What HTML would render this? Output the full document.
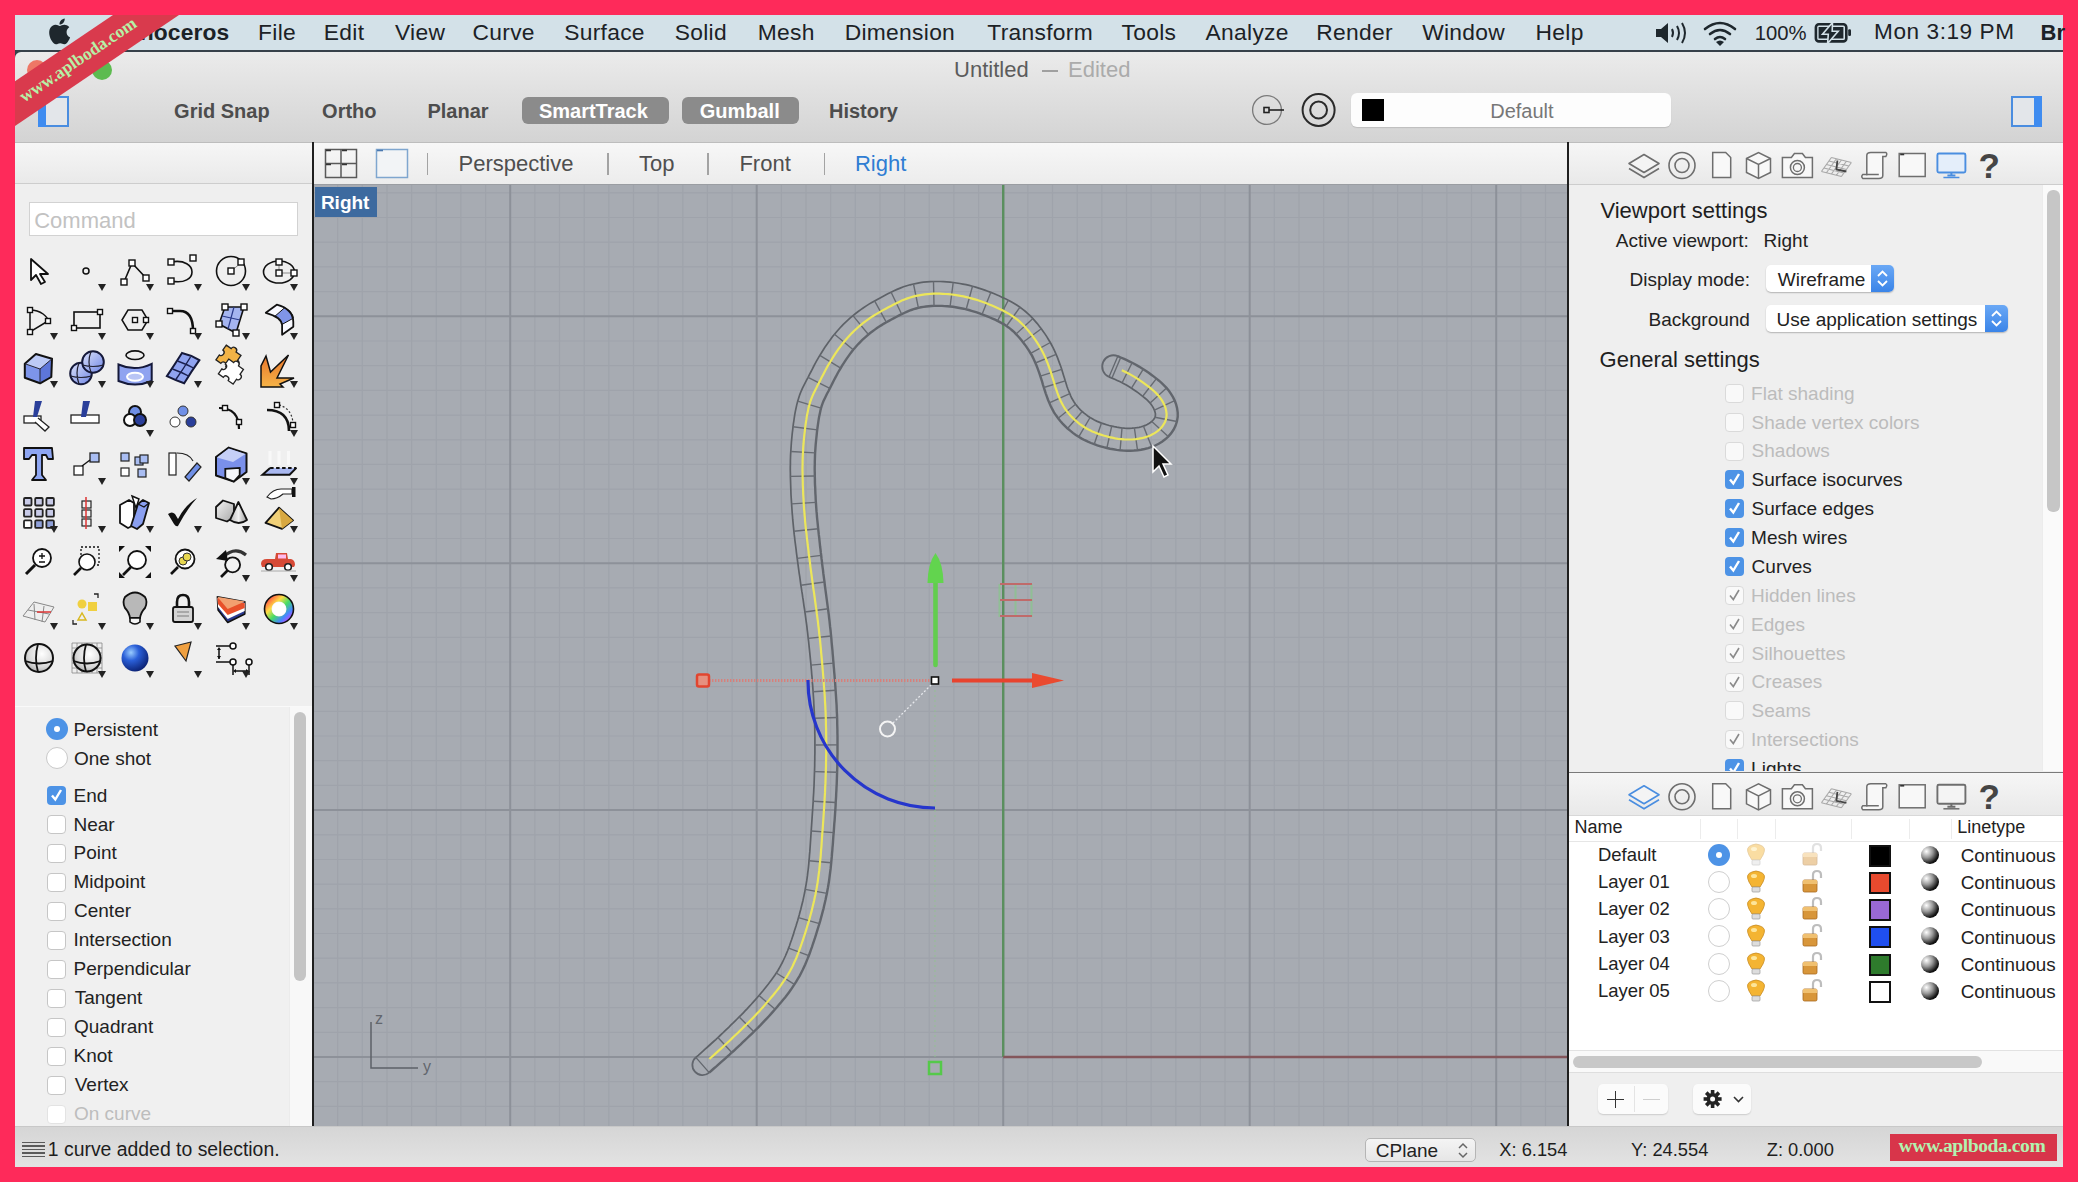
<!DOCTYPE html>
<html><head><meta charset="utf-8">
<style>
*{margin:0;padding:0;box-sizing:border-box}
html,body{width:2078px;height:1182px;overflow:hidden}
body{background:#fe2a5a;font-family:"Liberation Sans",sans-serif;position:relative;color:#222}
.a{position:absolute}
.t{position:absolute;white-space:nowrap;line-height:1}
svg{overflow:visible}
</style></head><body>
<div class="a" style="left:15px;top:15px;width:2048px;height:36px;background:#d3e1e8;"></div>
<div class="a" style="left:15px;top:50px;width:2048px;height:2px;background:#37414a;"></div>
<svg class="a" style="left:47px;top:18px" width="24" height="27" viewBox="0 0 24 27">
<path fill="#1e272d" d="M19.6 14.3c0-3.3 2.7-4.9 2.8-5-1.5-2.2-3.9-2.5-4.7-2.6-2-.2-3.9 1.2-4.9 1.2-1 0-2.6-1.2-4.2-1.1-2.2 0-4.2 1.3-5.3 3.2-2.3 3.9-.6 9.8 1.6 13 1.1 1.6 2.4 3.3 4.1 3.3 1.6-.1 2.3-1.1 4.2-1.1 2 0 2.5 1.1 4.2 1 1.8 0 2.9-1.6 3.9-3.2 1.2-1.800 1.700-3.500 1.800-3.600-.1 0-3.500-1.300-3.500-5.100zM16.400 4.700c.9-1.100 1.500-2.600 1.300-4.100-1.300.1-2.900.9-3.800 2-.8.900-1.600 2.500-1.400 3.900 1.500.1 3-.7 3.900-1.800z"/></svg>
<div class="t" style="left:102.8px;top:21.3px;font-size:22.8px;color:#1c2226;font-weight:bold;letter-spacing:0.1px;">Rhinoceros</div>
<div class="t" style="left:258.1px;top:21.3px;font-size:22.8px;color:#1c2226;letter-spacing:0.3px;">File</div>
<div class="t" style="left:323.8px;top:21.3px;font-size:22.8px;color:#1c2226;letter-spacing:0.3px;">Edit</div>
<div class="t" style="left:395.0px;top:21.3px;font-size:22.8px;color:#1c2226;letter-spacing:0.3px;">View</div>
<div class="t" style="left:472.5px;top:21.3px;font-size:22.8px;color:#1c2226;letter-spacing:0.3px;">Curve</div>
<div class="t" style="left:564.2px;top:21.3px;font-size:22.8px;color:#1c2226;letter-spacing:0.3px;">Surface</div>
<div class="t" style="left:674.7px;top:21.3px;font-size:22.8px;color:#1c2226;letter-spacing:0.3px;">Solid</div>
<div class="t" style="left:757.7px;top:21.3px;font-size:22.8px;color:#1c2226;letter-spacing:0.3px;">Mesh</div>
<div class="t" style="left:844.7px;top:21.3px;font-size:22.8px;color:#1c2226;letter-spacing:0.3px;">Dimension</div>
<div class="t" style="left:987.3px;top:21.3px;font-size:22.8px;color:#1c2226;letter-spacing:0.3px;">Transform</div>
<div class="t" style="left:1121.5px;top:21.3px;font-size:22.8px;color:#1c2226;letter-spacing:0.3px;">Tools</div>
<div class="t" style="left:1205.6px;top:21.3px;font-size:22.8px;color:#1c2226;letter-spacing:0.3px;">Analyze</div>
<div class="t" style="left:1316.3px;top:21.3px;font-size:22.8px;color:#1c2226;letter-spacing:0.3px;">Render</div>
<div class="t" style="left:1422.2px;top:21.3px;font-size:22.8px;color:#1c2226;letter-spacing:0.3px;">Window</div>
<div class="t" style="left:1535.6px;top:21.3px;font-size:22.8px;color:#1c2226;letter-spacing:0.3px;">Help</div>
<svg class="a" style="left:1655px;top:20px" width="36" height="26" viewBox="0 0 36 26">
<path fill="#1e272d" d="M1 9h5l7-6v20l-7-6H1z"/>
<path fill="none" stroke="#1e272d" stroke-width="2" d="M17 9q2 4 0 8M22 6q4 7 0 14M27 3q6 10 0 20"/></svg>
<svg class="a" style="left:1702px;top:19px" width="36" height="28" viewBox="0 0 36 28">
<g fill="none" stroke="#1e272d" stroke-width="2.6" stroke-linecap="round">
<path d="M3 10q15-12 30 0"/><path d="M8 15q10-8 20 0"/><path d="M13 20q5-4 10 0"/></g>
<path fill="#1e272d" d="M14 23l4 4 4-4q-4-3-8 0z"/></svg>
<div class="t" style="left:1754.7px;top:23.3px;font-size:20.3px;color:#1c2226;">100%</div>
<svg class="a" style="left:1813px;top:19px" width="40" height="26" viewBox="0 0 40 26">
<rect x="2.9" y="5.2" width="30.4" height="17.2" rx="3" fill="none" stroke="#1e272d" stroke-width="2.6"/>
<rect x="5.6" y="8" width="24.8" height="11.5" fill="#1e272d"/>
<rect x="35.2" y="10.2" width="2.8" height="6.8" rx="1.2" fill="#1e272d"/>
<path d="M19.5 3.5L9.5 15.2H15.3L14.6 24.5L25.2 12.2H19.2Z" fill="#1e272d" stroke="#d3e1e8" stroke-width="1.6" stroke-linejoin="miter"/></svg>
<div class="t" style="left:1874.1px;top:21.4px;font-size:22.6px;color:#1c2226;letter-spacing:0.55px;">Mon 3:19 PM</div>
<div class="t" style="left:2040.5px;top:21.9px;font-size:22px;color:#1c2226;font-weight:bold;">Br</div>
<div class="a" style="left:15px;top:52px;width:8px;height:8px;background:#37414a;"></div>
<div class="a" style="left:15px;top:52px;width:2048px;height:91px;background:linear-gradient(#ebebeb,#d3d3d3);border-top-left-radius:6px"></div>
<div class="a" style="left:15px;top:142px;width:2048px;height:1px;background:#bdbdbd;"></div>
<div class="a" style="left:27px;top:60px;width:20px;height:20px;border-radius:50%;background:#ee7766"></div>
<div class="a" style="left:59px;top:60px;width:20px;height:20px;border-radius:50%;background:#f5bd4f"></div>
<div class="a" style="left:92px;top:60px;width:20px;height:20px;border-radius:50%;background:#5dbb50"></div>
<div class="t" style="left:954.1px;top:58.8px;font-size:22px;color:#5c5c5c;">Untitled</div>
<div class="a" style="left:1042px;top:70px;width:16px;height:2px;background:#a0a0a0;"></div>
<div class="t" style="left:1068.0px;top:58.8px;font-size:22px;color:#ababab;">Edited</div>
<div class="a" style="left:38px;top:96px;width:31px;height:31px;border:2px solid #4a8de0;background:#e3e6ea"></div>
<div class="a" style="left:38px;top:96px;width:8px;height:31px;background:#3f8cf0;"></div>
<div class="t" style="left:174.1px;top:100.6px;font-size:20px;color:#4d4d4d;font-weight:bold;">Grid Snap</div>
<div class="t" style="left:322.1px;top:100.6px;font-size:20px;color:#4d4d4d;font-weight:bold;">Ortho</div>
<div class="t" style="left:427.4px;top:100.6px;font-size:20px;color:#4d4d4d;font-weight:bold;">Planar</div>
<div class="a" style="left:522px;top:97px;width:147px;height:27px;border-radius:6px;background:#8b8b8b"></div>
<div class="a" style="left:682px;top:97px;width:117px;height:27px;border-radius:6px;background:#8b8b8b"></div>
<div class="t" style="left:538.9px;top:100.8px;font-size:20px;color:#ffffff;font-weight:bold;">SmartTrack</div>
<div class="t" style="left:699.7px;top:100.8px;font-size:20px;color:#ffffff;font-weight:bold;">Gumball</div>
<div class="t" style="left:829.0px;top:100.8px;font-size:20px;color:#4d4d4d;font-weight:bold;">History</div>
<svg class="a" style="left:1250px;top:92px" width="40" height="36" viewBox="0 0 40 36">
<circle cx="17" cy="18" r="14.4" fill="none" stroke="#7a7a7a" stroke-width="1.3"/>
<rect x="14" y="15.5" width="5" height="5" fill="none" stroke="#222" stroke-width="1.6"/>
<path d="M19 18h15" stroke="#222" stroke-width="1.6"/></svg>
<svg class="a" style="left:1300px;top:92px" width="38" height="36" viewBox="0 0 38 36">
<circle cx="18.6" cy="18" r="16" fill="none" stroke="#2a2a2a" stroke-width="2"/>
<circle cx="18.6" cy="18" r="8.4" fill="none" stroke="#2a2a2a" stroke-width="2"/></svg>
<div class="a" style="left:1351px;top:93px;width:320px;height:34px;border-radius:6px;background:#fdfdfd;box-shadow:0 1px 1px rgba(0,0,0,.12)"></div>
<div class="a" style="left:1362px;top:99px;width:22px;height:22px;background:#000;"></div>
<div class="t" style="left:1490.2px;top:101.1px;font-size:20px;color:#777777;">Default</div>
<div class="a" style="left:2011px;top:96px;width:31px;height:31px;border:2px solid #4a8de0;background:#e3e6ea"></div>
<div class="a" style="left:2034px;top:96px;width:8px;height:31px;background:#3f8cf0;"></div>
<div class="a" style="left:15px;top:143px;width:297px;height:983px;background:#efefef;"></div>
<div class="a" style="left:15px;top:143px;width:297px;height:41px;background:linear-gradient(#f6f6f6,#e9e9e9);"></div>
<div class="a" style="left:15px;top:183px;width:297px;height:1px;background:#cdcdcd;"></div>
<div class="a" style="left:29px;top:202px;width:269px;height:34px;background:#fff;border:1px solid #d2d2d2"></div>
<div class="t" style="left:34.2px;top:210.0px;font-size:22px;color:#c2c2c2;">Command</div>
<svg class="a" style="left:15px;top:240px" width="297" height="450" viewBox="15 240 297 450">
<defs><linearGradient id="rainbow" x1="0" y1="0" x2="1" y2="1"><stop offset="0" stop-color="#f44"/><stop offset=".3" stop-color="#fd4"/><stop offset=".55" stop-color="#4d6"/><stop offset=".8" stop-color="#48f"/><stop offset="1" stop-color="#c4f"/></linearGradient><linearGradient id="bsp2" x1="0" y1="0" x2="1" y2="1"><stop offset="0" stop-color="#dde3fb"/><stop offset="1" stop-color="#6f86e6"/></linearGradient><linearGradient id="gcube" x1="0" y1="0" x2="1" y2="1"><stop offset="0" stop-color="#f4f4f4"/><stop offset="1" stop-color="#a8a8a8"/></linearGradient><linearGradient id="gcone" x1="0" y1="0" x2="1" y2="0"><stop offset="0" stop-color="#b8b8b8"/><stop offset=".5" stop-color="#f0f0f0"/><stop offset="1" stop-color="#9a9a9a"/></linearGradient><linearGradient id="expl" x1="0" y1="0" x2="0" y2="1"><stop offset="0" stop-color="#e8742a"/><stop offset="1" stop-color="#f6b448"/></linearGradient><radialGradient id="gsph" cx=".6" cy=".35" r=".8"><stop offset="0" stop-color="#fff"/><stop offset=".6" stop-color="#d8d8d8"/><stop offset="1" stop-color="#999"/></radialGradient><radialGradient id="bsph" cx=".35" cy=".3" r=".75"><stop offset="0" stop-color="#9cf"/><stop offset=".4" stop-color="#2a5fd8"/><stop offset="1" stop-color="#0a1f70"/></radialGradient></defs>
<path d="M31 259V280L36 275L41 284L45 282L40 274L48 274Z" fill="#fff" stroke="#111" stroke-width="1.8" stroke-linejoin="round"/>
<circle cx="86" cy="271" r="3" fill="none" stroke="#111" stroke-width="1.5"/><path d="M98 284H106L102 291Z" fill="#222"/>
<path d="M124 282L132 263L146 278" fill="none" stroke="#111" stroke-width="1.6"/><rect x="121.0" y="279.0" width="6" height="6" fill="#fff" stroke="#111" stroke-width="1.4"/><rect x="129.0" y="260.0" width="6" height="6" fill="#fff" stroke="#111" stroke-width="1.4"/><rect x="143.0" y="275.0" width="6" height="6" fill="#fff" stroke="#111" stroke-width="1.4"/><path d="M146 284H154L150 291Z" fill="#222"/>
<path d="M171 262C199 257 199 287 171 281" fill="none" stroke="#111" stroke-width="1.6"/><rect x="168.0" y="259.0" width="6" height="6" fill="#fff" stroke="#111" stroke-width="1.4"/><rect x="190.0" y="255.0" width="6" height="6" fill="#fff" stroke="#111" stroke-width="1.4"/><rect x="168.0" y="278.0" width="6" height="6" fill="#fff" stroke="#111" stroke-width="1.4"/><path d="M194 284H202L198 291Z" fill="#222"/>
<circle cx="231" cy="271" r="14.5" fill="none" stroke="#111" stroke-width="1.6"/><path d="M231 271L241 263" stroke="#888"/><rect x="228.0" y="268.0" width="6" height="6" fill="#fff" stroke="#111" stroke-width="1.4"/><rect x="238.0" y="259.0" width="6" height="6" fill="#fff" stroke="#111" stroke-width="1.4"/><path d="M242 284H250L246 291Z" fill="#222"/>
<ellipse cx="279" cy="272" rx="15.5" ry="11" fill="none" stroke="#111" stroke-width="1.6"/><path d="M279 273H293M279 262V273" stroke="#888"/><rect x="276.0" y="259.0" width="6" height="6" fill="#fff" stroke="#111" stroke-width="1.4"/><rect x="276.0" y="270.0" width="6" height="6" fill="#fff" stroke="#111" stroke-width="1.4"/><rect x="291.0" y="270.0" width="6" height="6" fill="#fff" stroke="#111" stroke-width="1.4"/><path d="M290 284H298L294 291Z" fill="#222"/>
<path d="M30 310C41 310 48 317 48 321L30 332Z" fill="none" stroke="#111" stroke-width="1.5"/><rect x="27.5" y="307.5" width="5" height="5" fill="#fff" stroke="#111" stroke-width="1.4"/><rect x="45.5" y="318.5" width="5" height="5" fill="#fff" stroke="#111" stroke-width="1.4"/><rect x="27.5" y="329.5" width="5" height="5" fill="#fff" stroke="#111" stroke-width="1.4"/><path d="M50 333H58L54 340Z" fill="#222"/>
<rect x="74" y="312" width="26" height="16" fill="none" stroke="#111" stroke-width="1.6"/><rect x="71.5" y="325.5" width="5" height="5" fill="#fff" stroke="#111" stroke-width="1.4"/><rect x="97.5" y="309.5" width="5" height="5" fill="#fff" stroke="#111" stroke-width="1.4"/><path d="M98 333H106L102 340Z" fill="#222"/>
<path d="M122 320L128 310H142L148 320L142 330H128Z" fill="none" stroke="#111" stroke-width="1.5"/><rect x="132.5" y="317.5" width="5" height="5" fill="#fff" stroke="#111" stroke-width="1.4"/><rect x="143.5" y="317.5" width="5" height="5" fill="#fff" stroke="#111" stroke-width="1.4"/><path d="M146 333H154L150 340Z" fill="#222"/>
<path d="M170 311H180Q193 311 193 331" fill="none" stroke="#111" stroke-width="2.6"/><rect x="167.5" y="308.5" width="5" height="5" fill="#fff" stroke="#111" stroke-width="1.4"/><rect x="190.5" y="328.5" width="5" height="5" fill="#fff" stroke="#111" stroke-width="1.4"/><path d="M194 333H202L198 340Z" fill="#222"/>
<path d="M225 307L244 307L236 333L219 324Z" fill="#a5b5f0" stroke="#111" stroke-width="1.6"/><path d="M234 307L228 329M222 316L240 320" stroke="#2a3a8a" stroke-width="1.2"/><rect x="222.0" y="304.0" width="6" height="6" fill="#fff" stroke="#111" stroke-width="1.4"/><rect x="241.0" y="304.0" width="6" height="6" fill="#fff" stroke="#111" stroke-width="1.4"/><rect x="233.0" y="330.0" width="6" height="6" fill="#fff" stroke="#111" stroke-width="1.4"/><rect x="216.0" y="321.0" width="6" height="6" fill="#fff" stroke="#111" stroke-width="1.4"/><path d="M242 333H250L246 340Z" fill="#222"/>
<path d="M265.8 312.8L276.8 304.7Q293 309 293.3 322V326.8L282.1 334.7V324.9Q281 317 265.8 312.8Z" fill="#f8f9ff"/><path d="M275.1 316.1L284.7 307.7Q293 312 293.3 318.2L282.1 324.4Q281 318 275.1 316.1Z" fill="#8095e8" stroke="#111" stroke-width="1"/><path d="M265.8 312.8L276.8 304.7Q293 309 293.3 322V326.8L282.1 334.7V324.9Q281 317 265.8 312.8Z" fill="none" stroke="#111" stroke-width="1.8" stroke-linejoin="round"/><path d="M290 333H298L294 340Z" fill="#222"/>
<path d="M24.8 363.7L40 369V383.3L24.8 377.7Z" fill="#7d95ea"/><path d="M40 369L52 358.8L51.3 377L40.1 383.3Z" fill="#5d76da"/><path d="M24.8 363.7L35.9 354L52 358.8L40 369Z" fill="#bccaf6"/><path d="M24.8 363.7L35.9 354L52 358.8L51.3 377L40.1 383.3L24.8 377.7Z" fill="none" stroke="#111" stroke-width="2" stroke-linejoin="round"/><path d="M24.8 363.7L40 369L52 358.8M40 369V383.3" fill="none" stroke="#223" stroke-width="1"/><path d="M50 381H58L54 388Z" fill="#222"/>
<circle cx="81" cy="373.5" r="10.8" fill="url(#bsp2)" stroke="#15193a" stroke-width="2"/><path d="M70.5 376Q81 379 91.5 376M79 363Q75 373 79 384" fill="none" stroke="#223" stroke-width="1.2"/><circle cx="93" cy="362" r="10.8" fill="url(#bsp2)" stroke="#15193a" stroke-width="2"/><path d="M82.5 365Q93 368 103.5 365M91 351.5Q87 362 91 372.5" fill="none" stroke="#223" stroke-width="1.2"/><path d="M98 381H106L102 388Z" fill="#222"/>
<ellipse cx="135" cy="355.2" rx="9" ry="4.3" fill="none" stroke="#111" stroke-width="1.6"/><path d="M118.5 364.5Q135 372 151.7 363.8V381Q135 388 118.5 381Z" fill="#8fa3f0" stroke="#15193a" stroke-width="2"/><ellipse cx="135" cy="376.8" rx="8" ry="4" fill="#b9c5f5" stroke="#fff" stroke-width="2"/><path d="M146 381H154L150 388Z" fill="#222"/>
<path d="M182 353Q191 355 199.4 360.2Q191 372 184.2 383.3Q175 380 166.9 376.1Q175 364 182 353Z" fill="#8fa3f0" stroke="#15193a" stroke-width="2"/><path d="M190.5 357Q184 368 175.5 380M177.5 361Q186 364 193.5 368M172.5 369Q181 372 188.5 376" fill="none" stroke="#1a2050" stroke-width="1.4"/><path d="M194 381H202L198 388Z" fill="#222"/>
<g transform="rotate(35 231 368)"><path d="M216 356h6a3 3 0 0 1 6 0h6v6a3 3 0 0 1 0 6v6h-6a3 3 0 0 0-6 0h-6v-6a3 3 0 0 0 0-6z" fill="#f2b346" stroke="#222" stroke-width="1.3" transform="translate(-2 -4)"/><path d="M230 368h6a3 3 0 0 1 6 0h6v6a3 3 0 0 1 0 6v6h-6a3 3 0 0 0-6 0h-6v-6a3 3 0 0 0 0-6z" fill="#fff" stroke="#222" stroke-width="1.3" transform="translate(-6 -6)"/></g>
<path d="M261 387V366L266 356L270.5 372L288.5 355L277 378L294 378L280 384L283 387Z" fill="url(#expl)" stroke="#111" stroke-width="1.5" stroke-linejoin="miter"/><path d="M290 381H298L294 388Z" fill="#222"/>
<rect x="24" y="416" width="17" height="7" fill="#fff" stroke="#222" stroke-width="1.3"/><path d="M38 418L49 427L45 431L35 422" fill="#fff" stroke="#222" stroke-width="1.3"/><path d="M35 401H42L37 417H33Z" fill="#2a3f9a"/>
<rect x="71" y="415" width="28" height="8" fill="#fff" stroke="#222" stroke-width="1.3"/><path d="M83 401H90L86 417H81Z" fill="#2a3f9a"/>
<circle cx="135" cy="412" r="6" fill="#6f8fe6" stroke="#111" stroke-width="2"/><circle cx="130" cy="420" r="6" fill="#fff" stroke="#111" stroke-width="2"/><circle cx="140" cy="420" r="6" fill="#2a3f9a" stroke="#111" stroke-width="2"/><path d="M146 430H154L150 437Z" fill="#222"/>
<circle cx="183" cy="411" r="5" fill="#6f8fe6" stroke="#333" stroke-width="1"/><circle cx="175" cy="422" r="5" fill="#fff" stroke="#333" stroke-width="1"/><circle cx="191" cy="422" r="5" fill="#2a3f9a" stroke="#333" stroke-width="1"/>
<path d="M219 408Q239 408 239 429" fill="none" stroke="#111" stroke-width="2.2"/><rect x="222.5" y="405.5" width="5" height="5" fill="#fff" stroke="#111" stroke-width="1.4"/><rect x="236.5" y="419.5" width="5" height="5" fill="#fff" stroke="#111" stroke-width="1.4"/>
<path d="M267 410Q289 410 289 431" fill="none" stroke="#111" stroke-width="2.6"/><path d="M275 404Q293 407 293 425" fill="none" stroke="#333" stroke-width="1.2" stroke-dasharray="2 2"/><rect x="274.5" y="402.5" width="5" height="5" fill="#fff" stroke="#111" stroke-width="1.4"/><rect x="290.5" y="422.5" width="5" height="5" fill="#fff" stroke="#111" stroke-width="1.4"/><path d="M290 430H298L294 437Z" fill="#222"/>
<path d="M24 448H52L53 459H48L46 455H42V475L46 480H32L36 475V455H32L29 459H24Z" fill="#8ea6f2" stroke="#111" stroke-width="1.8" stroke-linejoin="round"/>
<rect x="74" y="466" width="9" height="9" fill="#fff" stroke="#222" stroke-width="1.3"/><rect x="90" y="453" width="9" height="9" fill="#a9bdf2" stroke="#222" stroke-width="1.3"/><path d="M82 466L90 460" stroke="#111" stroke-width="1.4"/><path d="M98 478H106L102 485Z" fill="#222"/>
<rect x="121" y="453" width="8" height="8" fill="#a9bdf2" stroke="#222" stroke-width="1.2"/><rect x="121" y="468" width="8" height="8" fill="#fff" stroke="#222" stroke-width="1.2"/><rect x="135" y="457" width="8" height="8" fill="#a9bdf2" stroke="#222" stroke-width="1.2"/><rect x="140" y="455" width="8" height="8" fill="#a9bdf2" stroke="#222" stroke-width="1.2"/><rect x="138" y="469" width="8" height="8" fill="#a9bdf2" stroke="#222" stroke-width="1.2"/>
<rect x="169" y="453" width="7" height="22" fill="#fff" stroke="#222" stroke-width="1.2"/><path d="M185 477L197 463L201 467L189 481Z" fill="#6f8fe6" stroke="#222" stroke-width="1.2"/><path d="M177 453Q189 453 193 461" fill="none" stroke="#222" stroke-width="1.2"/>
<path d="M216 457L228.7 447.6L246.5 453.5V472L233.8 481.5L216 475.5Z" fill="#7a90ea" stroke="#111" stroke-width="2" stroke-linejoin="round"/><path d="M217 457.5L228.7 448.6L245.5 454L233 462Z" fill="#c5cff7"/><path d="M225.3 468.8L239.7 467.9V475L233.8 481.5L225.3 478Z" fill="#f4f6fa" stroke="#111" stroke-width="1.8"/><path d="M242 478H250L246 485Z" fill="#222"/>
<path d="M270 451V465M279 451V465M288.5 451V465" stroke="#fafafa" stroke-width="3.2" opacity=".85"/><path d="M262.5 474.7L270.1 467.9H296.4L289.6 474.7Z" fill="#a9b8f0"/><path d="M270.1 467.9H296.4" stroke="#111" stroke-width="2" stroke-dasharray="3.5 2.5"/><path d="M270.1 467.9L262.5 474.7H289.6L296.4 467.9" fill="none" stroke="#111" stroke-width="2"/><path d="M290 478H298L294 485Z" fill="#222"/>
<rect x="24.0" y="498.0" width="7.5" height="7.5" rx="1" fill="#c8cbe8" stroke="#222" stroke-width="1.8"/><rect x="24.0" y="509.2" width="7.5" height="7.5" rx="1" fill="#c8cbe8" stroke="#222" stroke-width="1.8"/><rect x="24.0" y="520.4" width="7.5" height="7.5" rx="1" fill="#fff" stroke="#222" stroke-width="1.8"/><rect x="35.2" y="498.0" width="7.5" height="7.5" rx="1" fill="#c8cbe8" stroke="#222" stroke-width="1.8"/><rect x="35.2" y="509.2" width="7.5" height="7.5" rx="1" fill="#c8cbe8" stroke="#222" stroke-width="1.8"/><rect x="35.2" y="520.4" width="7.5" height="7.5" rx="1" fill="#8fa0d8" stroke="#222" stroke-width="1.8"/><rect x="46.4" y="498.0" width="7.5" height="7.5" rx="1" fill="#c8cbe8" stroke="#222" stroke-width="1.8"/><rect x="46.4" y="509.2" width="7.5" height="7.5" rx="1" fill="#c8cbe8" stroke="#222" stroke-width="1.8"/><rect x="46.4" y="520.4" width="7.5" height="7.5" rx="1" fill="#8fa0d8" stroke="#222" stroke-width="1.8"/><path d="M50 526H58L54 533Z" fill="#222"/>
<rect x="82" y="501" width="9" height="7" fill="none" stroke="#222" stroke-width="1.2"/><rect x="82" y="510" width="9" height="7" fill="none" stroke="#222" stroke-width="1.2"/><rect x="82" y="519" width="9" height="7" fill="none" stroke="#222" stroke-width="1.2"/><path d="M86 497V529" stroke="#d33" stroke-width="1.5"/><path d="M98 526H106L102 533Z" fill="#222"/>
<path d="M120 505L129 500L134 503V525L128 528L120 523Z" fill="#fff" stroke="#111" stroke-width="1.8" stroke-linejoin="round"/><path d="M132 496L139 499L136 508Z" fill="#fff" stroke="#111" stroke-width="1.4"/><path d="M131 526L138 504L143 500L149 503L143 524L137 529Z" fill="#8a9ff0" stroke="#111" stroke-width="1.8" stroke-linejoin="round"/><path d="M138 504L144 507L149 503" fill="none" stroke="#111" stroke-width="1.2"/><path d="M146 526H154L150 533Z" fill="#222"/>
<path d="M168 514Q172 511 175 514L178 519Q185 505 197 498Q187 509 178 526Q176 527 174 524Z" fill="#111"/><path d="M194 526H202L198 533Z" fill="#222"/>
<path d="M216 507L223 500.5L234 504V517L227 521.5L216 518Z" fill="url(#gcube)" stroke="#111" stroke-width="1.8" stroke-linejoin="round"/><path d="M238.4 502L247 520Q239 526 230 520Z" fill="url(#gcone)" stroke="#111" stroke-width="1.8" stroke-linejoin="round"/><path d="M242 526H250L246 533Z" fill="#222"/>
<path d="M279 507.7L265.5 522.9L282 528.8L293 520.4Z" fill="#f0d078" stroke="#111" stroke-width="1.8" stroke-linejoin="round"/><path d="M279 507.7L282 528.8L293 520.4Z" fill="#d8a840"/><path d="M267 497Q273 489 281 489H292V494H283Q277 499 271 499Z" fill="#fff" stroke="#222" stroke-width="1.2"/><rect x="292" y="487" width="3.5" height="10" fill="#111"/><path d="M290 526H298L294 533Z" fill="#222"/>
<circle cx="42" cy="558" r="9" fill="#fff" stroke="#111" stroke-width="1.8"/><path d="M35 565L26 574" stroke="#111" stroke-width="3"/><path d="M39 556h6M42 553v6M39 562h6" stroke="#111" stroke-width="1.3"/>
<rect x="81" y="547" width="18" height="18" fill="none" stroke="#111" stroke-width="1.3" stroke-dasharray="2 2"/><circle cx="87" cy="562" r="8" fill="#fff" stroke="#111" stroke-width="1.6"/><path d="M81 568L74 575" stroke="#111" stroke-width="2.6"/>
<circle cx="137" cy="560" r="9" fill="#fff" stroke="#111" stroke-width="1.8"/><path d="M131 567L123 575" stroke="#111" stroke-width="2.6"/><path d="M119 546h6l-6 6zM151 546h-6l6 6zM151 578h-6l6-6zM119 578h6l-6-6z" fill="#111"/>
<circle cx="185" cy="559" r="9.5" fill="#fff" stroke="#111" stroke-width="1.8"/><circle cx="183" cy="561" r="4" fill="#e8d850" stroke="#333"/><circle cx="187" cy="557" r="4" fill="#e8d850" stroke="#333"/><path d="M178 567L171 574" stroke="#111" stroke-width="2.6"/>
<circle cx="232.6" cy="564.8" r="7.5" fill="#f2f2f2" stroke="#111" stroke-width="1.8"/><path d="M227.5 570.5L221 577" stroke="#111" stroke-width="2.6"/><path d="M223 557Q235 546 246 555" fill="none" stroke="#333" stroke-width="3.2"/><path d="M216 559L226 550L228 561Z" fill="#111"/><path d="M242 575H250L246 582Z" fill="#222"/>
<path d="M261 564Q261 559 267 559H275L276 553H287L288 559H291Q295 560 295 565L294 567H262Z" fill="#d64a36"/><rect x="278" y="554.5" width="8" height="4" fill="#fbe"/><circle cx="269" cy="567" r="3.3" fill="#fff" stroke="#222" stroke-width="1.6"/><circle cx="288" cy="567" r="3.3" fill="#fff" stroke="#222" stroke-width="1.6"/><path d="M261 571H296" stroke="#aaa" stroke-width="1"/><path d="M290 575H298L294 582Z" fill="#222"/>
<path d="M23 616L34 602L54 607L45 622Z" fill="#eee" stroke="#888" stroke-width="1"/><path d="M28 610L49 614M34 604L35 620M44 606L42 622" stroke="#888"/><path d="M37 612H51" stroke="#d33" stroke-width="1.5"/><path d="M50 623H58L54 630Z" fill="#222"/>
<circle cx="82" cy="604" r="4.5" fill="#f0d040"/><rect x="88" y="602" width="9" height="9" fill="#f0d040"/><path d="M82 613L78 620H86Z" fill="none" stroke="#d8b820" stroke-width="1.5"/><path d="M94 594h4v4M73 620v4h4" fill="none" stroke="#222" stroke-width="1.3"/><path d="M98 623H106L102 630Z" fill="#222"/>
<path d="M130 618Q129 612 125 608Q122 602 125 597Q135 588 145 597Q148 602 145 608Q141 612 140 618Z" fill="#b8b8b8" stroke="#111" stroke-width="1.8"/><path d="M130 618H140V622Q135 626 130 622Z" fill="#f4f4f4" stroke="#111" stroke-width="1.6"/><path d="M146 623H154L150 630Z" fill="#222"/>
<path d="M177 608V602Q177 595 183 595Q189 595 189 602V608" fill="none" stroke="#111" stroke-width="2.6"/><rect x="173" y="607" width="20" height="15" rx="2" fill="#d4d4d4" stroke="#111" stroke-width="1.8"/><path d="M177 612H189M177 616H189" stroke="#999" stroke-width="1.4"/><path d="M194 623H202L198 630Z" fill="#222"/>
<path d="M217.3 596.7L244.9 601.6V614L227.7 622.5L218 610Z" fill="#2a3a90" stroke="#111" stroke-width="1.4" stroke-linejoin="round"/><path d="M217.5 598L244.7 603V611L227.7 619L218 607Z" fill="#fff"/><path d="M217.5 598L244.7 603V608L227.7 615L218 604Z" fill="#e8502a"/><path d="M217.3 596.7L244.9 601.6L227.7 609Z" fill="#f2a070"/><path d="M242 623H250L246 630Z" fill="#222"/>
<circle cx="279" cy="609" r="11" fill="none" stroke="url(#rainbow)" stroke-width="7"/><circle cx="279" cy="609" r="14.5" fill="none" stroke="#111" stroke-width="1.6"/><circle cx="279" cy="609" r="7" fill="#fff"/><path d="M290 623H298L294 630Z" fill="#222"/>
<circle cx="39" cy="658" r="14" fill="url(#gsph)" stroke="#111" stroke-width="2"/><path d="M25 661Q39 666 53 661" fill="none" stroke="#111" stroke-width="1.8"/><path d="M38 644Q34 658 38 672" fill="none" stroke="#111" stroke-width="1.8"/>
<path d="M72 643V673M72 643H102" stroke="#888" stroke-width=".8"/><path d="M77 643V673M72 648H102" stroke="#888" stroke-width=".8"/><path d="M82 643V673M72 653H102" stroke="#888" stroke-width=".8"/><path d="M87 643V673M72 658H102" stroke="#888" stroke-width=".8"/><path d="M92 643V673M72 663H102" stroke="#888" stroke-width=".8"/><path d="M97 643V673M72 668H102" stroke="#888" stroke-width=".8"/><path d="M102 643V673M72 673H102" stroke="#888" stroke-width=".8"/><circle cx="87" cy="658" r="13.5" fill="url(#gsph)" stroke="#111" stroke-width="2"/><path d="M73.5 661Q87 666 100.5 661" fill="none" stroke="#111" stroke-width="1.8"/><path d="M86 644.5Q82 658 86 671.5" fill="none" stroke="#111" stroke-width="1.8"/><path d="M98 671H106L102 678Z" fill="#222"/>
<circle cx="135" cy="658" r="13.5" fill="url(#bsph)"/><path d="M146 671H154L150 678Z" fill="#222"/>
<path d="M175 646L191 642L186 661Z" fill="#f0a040" stroke="#222" stroke-width="1.2"/><path d="M194 671H202L198 678Z" fill="#222"/>
<path d="M216 646H230M216 662H230M219 649V659M233 665V675M249 665V675M236 671H246" fill="none" stroke="#111" stroke-width="1.5"/><path d="M217 650l2-3 2 3zM217 656l2 3 2-3zM236 669l-3 2 3 2zM246 669l3 2-3 2z" fill="#111"/><circle cx="233" cy="646" r="3" fill="#fff" stroke="#111" stroke-width="1.5"/><circle cx="233" cy="662" r="3" fill="#fff" stroke="#111" stroke-width="1.5"/><circle cx="249" cy="662" r="3" fill="#fff" stroke="#111" stroke-width="1.5"/><path d="M242 671H250L246 678Z" fill="#222"/>
</svg>
<div class="a" style="left:15px;top:706px;width:297px;height:1.5px;background:#f9f9f9;"></div>
<div class="a" style="left:15px;top:707px;width:275px;height:419px;background:#f0f0f0;"></div>
<div class="a" style="left:289px;top:707px;width:23px;height:419px;background:#f8f8f8;"></div>
<div class="a" style="left:289px;top:707px;width:1px;height:419px;background:#ebebeb;"></div>
<div class="a" style="left:294px;top:712px;width:12px;height:269px;border-radius:6px;background:#c4c4c4"></div>
<div class="a" style="left:45.5px;top:718px;width:22px;height:22px;border-radius:50%;background:#4d93e6"></div>
<div class="a" style="left:53.5px;top:726px;width:6px;height:6px;border-radius:50%;background:#fff"></div>
<div class="a" style="left:45.5px;top:747px;width:22px;height:22px;border-radius:50%;background:#fff;border:1px solid #c9c9c9"></div>
<div class="t" style="left:73.5px;top:720.2px;font-size:19px;color:#222;">Persistent</div>
<div class="t" style="left:74.0px;top:749.2px;font-size:19px;color:#222;">One shot</div>
<div class="a" style="left:47px;top:786.3px;width:19px;height:19px;border-radius:4px;background:#4d93e6"></div>
<svg class="a" style="left:47px;top:786.3px" width="19" height="19" viewBox="0 0 19 19"><path d="M5 9.5L8.3 13.5L14 4" fill="none" stroke="#fff" stroke-width="2.4"/></svg>
<div class="t" style="left:73.5px;top:785.5px;font-size:19px;color:#222;">End</div>
<div class="a" style="left:47px;top:815.2px;width:19px;height:19px;border-radius:4px;background:#fff;border:1px solid #c6c6c6"></div>
<div class="t" style="left:73.5px;top:814.5px;font-size:19px;color:#222;">Near</div>
<div class="a" style="left:47px;top:844.2px;width:19px;height:19px;border-radius:4px;background:#fff;border:1px solid #c6c6c6"></div>
<div class="t" style="left:73.5px;top:843.4px;font-size:19px;color:#222;">Point</div>
<div class="a" style="left:47px;top:873.1px;width:19px;height:19px;border-radius:4px;background:#fff;border:1px solid #c6c6c6"></div>
<div class="t" style="left:73.5px;top:872.3px;font-size:19px;color:#222;">Midpoint</div>
<div class="a" style="left:47px;top:902.0px;width:19px;height:19px;border-radius:4px;background:#fff;border:1px solid #c6c6c6"></div>
<div class="t" style="left:74.0px;top:901.2px;font-size:19px;color:#222;">Center</div>
<div class="a" style="left:47px;top:930.9px;width:19px;height:19px;border-radius:4px;background:#fff;border:1px solid #c6c6c6"></div>
<div class="t" style="left:73.5px;top:930.2px;font-size:19px;color:#222;">Intersection</div>
<div class="a" style="left:47px;top:959.9px;width:19px;height:19px;border-radius:4px;background:#fff;border:1px solid #c6c6c6"></div>
<div class="t" style="left:73.5px;top:959.1px;font-size:19px;color:#222;">Perpendicular</div>
<div class="a" style="left:47px;top:988.8px;width:19px;height:19px;border-radius:4px;background:#fff;border:1px solid #c6c6c6"></div>
<div class="t" style="left:74.7px;top:988.0px;font-size:19px;color:#222;">Tangent</div>
<div class="a" style="left:47px;top:1017.7px;width:19px;height:19px;border-radius:4px;background:#fff;border:1px solid #c6c6c6"></div>
<div class="t" style="left:74.0px;top:1017.0px;font-size:19px;color:#222;">Quadrant</div>
<div class="a" style="left:47px;top:1046.7px;width:19px;height:19px;border-radius:4px;background:#fff;border:1px solid #c6c6c6"></div>
<div class="t" style="left:73.5px;top:1045.9px;font-size:19px;color:#222;">Knot</div>
<div class="a" style="left:47px;top:1075.6px;width:19px;height:19px;border-radius:4px;background:#fff;border:1px solid #c6c6c6"></div>
<div class="t" style="left:74.7px;top:1074.8px;font-size:19px;color:#222;">Vertex</div>
<div class="a" style="left:47px;top:1104.5px;width:19px;height:19px;border-radius:4px;background:#fff;border:1px solid #e3e3e3"></div>
<div class="t" style="left:74.0px;top:1103.8px;font-size:19px;color:#bdbdbd;">On curve</div>
<div class="a" style="left:312px;top:143px;width:1256px;height:41px;background:linear-gradient(#f7f7f7,#ececec);"></div>
<div class="a" style="left:312px;top:184px;width:1256px;height:1.5px;background:#9a9da2;"></div>
<svg class="a" style="left:324px;top:148px" width="36" height="32" viewBox="0 0 36 32">
<g fill="none" stroke="#595959" stroke-width="1.5"><rect x="1.5" y="1.5" width="31" height="28"/><path d="M17 1.5v28M1.5 15.5h31"/></g>
<g stroke="#333" stroke-width="1.6"><path d="M2 2.5h5M18 2.5h5M2 16.5h5M18 16.5h5"/></g></svg>
<svg class="a" style="left:375px;top:148px" width="36" height="32" viewBox="0 0 36 32">
<rect x="1.5" y="1.5" width="31" height="28" fill="#f2f4f6" stroke="#7fa6cf" stroke-width="1.5"/>
<path d="M2 2.5h6" stroke="#4a78b0" stroke-width="1.6"/></svg>
<div class="a" style="left:426.75px;top:153px;width:1.5px;height:22px;background:#a3a3a3;"></div>
<div class="a" style="left:607.25px;top:153px;width:1.5px;height:22px;background:#a3a3a3;"></div>
<div class="a" style="left:707.25px;top:153px;width:1.5px;height:22px;background:#a3a3a3;"></div>
<div class="a" style="left:823.75px;top:153px;width:1.5px;height:22px;background:#a3a3a3;"></div>
<div class="t" style="left:458.5px;top:152.7px;font-size:22px;color:#4f4f4f;">Perspective</div>
<div class="t" style="left:639.1px;top:152.7px;font-size:22px;color:#4f4f4f;">Top</div>
<div class="t" style="left:739.4px;top:152.7px;font-size:22px;color:#4f4f4f;">Front</div>
<div class="t" style="left:854.9px;top:152.7px;font-size:22px;color:#2f7dd3;">Right</div>
<svg class="a" style="left:313px;top:185px" width="1255" height="941" viewBox="313 185 1255 941">
<rect x="313" y="185" width="1255" height="941" fill="#a7abb2"/>
<path d="M313.0 185V1126M337.7 185V1126M362.3 185V1126M387.0 185V1126M411.6 185V1126M436.3 185V1126M460.9 185V1126M485.6 185V1126M534.9 185V1126M559.5 185V1126M584.2 185V1126M608.8 185V1126M633.5 185V1126M658.1 185V1126M682.8 185V1126M707.4 185V1126M732.1 185V1126M781.4 185V1126M806.0 185V1126M830.7 185V1126M855.3 185V1126M880.0 185V1126M904.6 185V1126M929.2 185V1126M953.9 185V1126M978.6 185V1126M1027.9 185V1126M1052.5 185V1126M1077.2 185V1126M1101.8 185V1126M1126.5 185V1126M1151.1 185V1126M1175.8 185V1126M1200.4 185V1126M1225.0 185V1126M1274.3 185V1126M1299.0 185V1126M1323.7 185V1126M1348.3 185V1126M1373.0 185V1126M1397.6 185V1126M1422.2 185V1126M1446.9 185V1126M1471.5 185V1126M1520.8 185V1126M1545.5 185V1126M313 192.8H1568M313 217.5H1568M313 242.2H1568M313 266.9H1568M313 291.6H1568M313 341.0H1568M313 365.7H1568M313 390.4H1568M313 415.1H1568M313 439.8H1568M313 464.4H1568M313 489.1H1568M313 513.8H1568M313 538.5H1568M313 587.9H1568M313 612.6H1568M313 637.3H1568M313 662.0H1568M313 686.6H1568M313 711.3H1568M313 736.0H1568M313 760.7H1568M313 785.4H1568M313 834.8H1568M313 859.5H1568M313 884.2H1568M313 908.9H1568M313 933.5H1568M313 958.2H1568M313 982.9H1568M313 1007.6H1568M313 1032.3H1568M313 1081.7H1568M313 1106.4H1568" stroke="#9fa3ab" stroke-width="1.2" fill="none"/>
<path d="M510.2 185V1126M756.7 185V1126M1003.2 185V1126M1249.7 185V1126M1496.2 185V1126M313 316.3H1568M313 563.2H1568M313 810.1H1568M313 1057.0H1568" stroke="#8d9199" stroke-width="2" fill="none"/>
<path d="M1003.2 185V1057.0" stroke="#5a8f5e" stroke-width="2.4"/>
<path d="M1003.2 1057.0H1568" stroke="#84565b" stroke-width="2.4"/>
<path d="M709.2 1072.6 L711.6 1070.5 L713.8 1068.5 L716.1 1066.6 L718.3 1064.6 L720.5 1062.7 L722.8 1060.7 L725.1 1058.7 L727.3 1056.6 L729.6 1054.6 L731.8 1052.5 L734.1 1050.5 L736.3 1048.4 L738.5 1046.3 L740.7 1044.3 L742.9 1042.2 L745.1 1040.1 L747.3 1038.0 L749.5 1035.9 L751.7 1033.8 L753.9 1031.7 L756.1 1029.5 L758.3 1027.3 L760.5 1025.1 L762.6 1022.9 L764.7 1020.7 L766.9 1018.4 L768.9 1016.2 L771.0 1013.9 L773.0 1011.6 L775.1 1009.3 L777.1 1007.0 L779.1 1004.6 L781.1 1002.3 L783.1 999.8 L785.1 997.4 L787.0 994.9 L788.9 992.4 L790.8 989.8 L792.6 987.1 L794.4 984.4 L796.2 981.7 L797.8 978.9 L799.5 976.1 L801.0 973.2 L802.5 970.3 L803.8 967.4 L805.2 964.5 L806.4 961.6 L807.6 958.6 L808.8 955.7 L809.9 952.8 L810.9 949.8 L812.0 946.9 L812.9 944.0 L813.9 941.1 L814.9 938.2 L815.8 935.3 L816.7 932.4 L817.6 929.4 L818.5 926.5 L819.4 923.6 L820.3 920.6 L821.1 917.6 L821.9 914.6 L822.7 911.6 L823.5 908.6 L824.2 905.6 L824.9 902.6 L825.6 899.6 L826.2 896.5 L826.9 893.4 L827.4 890.4 L828.0 887.3 L828.5 884.2 L829.0 881.1 L829.4 878.1 L829.8 875.0 L830.2 871.9 L830.6 868.9 L830.9 865.8 L831.2 862.8 L831.5 859.7 L831.8 856.7 L832.0 853.7 L832.3 850.6 L832.5 847.6 L832.8 844.6 L833.0 841.6 L833.2 838.6 L833.4 835.6 L833.7 832.6 L833.9 829.6 L834.1 826.6 L834.3 823.6 L834.6 820.6 L834.8 817.6 L835.0 814.6 L835.2 811.6 L835.4 808.6 L835.6 805.6 L835.7 802.5 L835.9 799.5 L836.1 796.5 L836.2 793.5 L836.4 790.4 L836.5 787.4 L836.7 784.4 L836.8 781.4 L836.9 778.3 L837.0 775.3 L837.1 772.3 L837.2 769.2 L837.3 766.2 L837.3 763.1 L837.4 760.1 L837.4 757.1 L837.5 754.0 L837.5 751.0 L837.5 747.9 L837.5 744.9 L837.5 741.9 L837.5 738.8 L837.5 735.8 L837.4 732.8 L837.4 729.7 L837.3 726.7 L837.2 723.6 L837.2 720.6 L837.1 717.5 L837.0 714.5 L836.8 711.5 L836.7 708.4 L836.6 705.4 L836.4 702.3 L836.2 699.3 L836.0 696.2 L835.8 693.2 L835.6 690.2 L835.4 687.2 L835.2 684.1 L835.0 681.1 L834.7 678.1 L834.5 675.1 L834.2 672.1 L834.0 669.1 L833.7 666.1 L833.5 663.1 L833.2 660.1 L833.0 657.1 L832.7 654.0 L832.5 651.0 L832.2 648.0 L831.9 645.0 L831.6 642.0 L831.4 639.0 L831.1 636.0 L830.8 633.0 L830.5 629.9 L830.1 626.9 L829.8 623.9 L829.5 620.9 L829.1 617.8 L828.8 614.8 L828.4 611.8 L828.0 608.8 L827.6 605.8 L827.2 602.8 L826.8 599.8 L826.4 596.8 L826.0 593.9 L825.6 590.9 L825.2 587.9 L824.8 585.0 L824.5 582.0 L824.1 579.1 L823.7 576.1 L823.3 573.2 L823.0 570.2 L822.6 567.3 L822.2 564.3 L821.9 561.3 L821.5 558.4 L821.2 555.4 L820.8 552.4 L820.5 549.4 L820.1 546.5 L819.8 543.5 L819.5 540.6 L819.2 537.6 L818.8 534.7 L818.5 531.7 L818.2 528.8 L817.9 525.9 L817.6 522.9 L817.3 520.0 L817.0 517.1 L816.8 514.2 L816.5 511.2 L816.3 508.3 L816.1 505.4 L815.9 502.4 L815.7 499.5 L815.6 496.5 L815.4 493.6 L815.3 490.7 L815.2 487.7 L815.0 484.8 L814.9 481.9 L814.9 478.9 L814.8 476.0 L814.8 473.1 L814.7 470.2 L814.7 467.3 L814.8 464.4 L814.8 461.5 L814.9 458.7 L815.0 455.8 L815.1 452.9 L815.3 450.1 L815.5 447.2 L815.7 444.3 L816.0 441.4 L816.3 438.5 L816.6 435.6 L816.9 432.7 L817.2 429.9 L817.6 427.0 L818.0 424.1 L818.4 421.3 L818.8 418.6 L819.3 415.9 L819.9 413.2 L820.4 410.7 L821.0 408.2 L821.7 405.9 L822.5 403.6 L823.4 401.3 L824.5 398.9 L825.7 396.4 L827.0 393.8 L828.4 391.2 L829.8 388.4 L831.2 385.7 L832.5 383.1 L833.8 380.5 L835.2 377.9 L836.5 375.5 L837.8 373.0 L839.2 370.5 L840.7 368.1 L842.1 365.7 L843.6 363.3 L845.2 360.9 L846.7 358.6 L848.3 356.4 L849.9 354.1 L851.5 352.0 L853.2 349.8 L855.0 347.8 L856.7 345.8 L858.5 343.8 L860.4 341.8 L862.3 339.9 L864.3 338.1 L866.3 336.3 L868.4 334.5 L870.5 332.8 L872.6 331.2 L874.8 329.6 L877.0 328.0 L879.3 326.5 L881.6 325.1 L884.0 323.6 L886.4 322.3 L888.9 320.9 L891.4 319.5 L894.0 318.1 L896.6 316.8 L899.2 315.4 L901.7 314.2 L904.2 313.0 L906.6 311.9 L908.9 310.9 L911.3 310.0 L913.6 309.2 L916.0 308.5 L918.4 307.8 L920.9 307.3 L923.5 306.9 L926.1 306.5 L928.7 306.2 L931.3 306.0 L934.0 305.9 L936.6 305.9 L939.3 305.9 L942.0 305.9 L944.7 306.1 L947.4 306.3 L950.1 306.5 L952.9 306.8 L955.6 307.2 L958.2 307.7 L960.9 308.2 L963.6 308.7 L966.2 309.3 L968.9 310.0 L971.5 310.8 L974.2 311.6 L976.8 312.4 L979.5 313.4 L982.1 314.3 L984.7 315.3 L987.4 316.4 L990.0 317.5 L992.5 318.6 L995.1 319.7 L997.5 320.9 L999.9 322.1 L1002.2 323.4 L1004.4 324.6 L1006.5 326.0 L1008.5 327.4 L1010.4 328.9 L1012.3 330.5 L1014.2 332.2 L1016.0 334.1 L1017.8 336.0 L1019.6 338.0 L1021.3 340.1 L1023.0 342.2 L1024.7 344.4 L1026.3 346.6 L1027.8 348.9 L1029.3 351.1 L1030.6 353.4 L1032.0 355.7 L1033.2 358.1 L1034.3 360.5 L1035.4 363.0 L1036.5 365.5 L1037.5 368.1 L1038.5 370.8 L1039.4 373.4 L1040.3 376.1 L1041.2 378.9 L1042.1 381.7 L1042.9 384.6 L1043.8 387.5 L1044.8 390.5 L1045.8 393.6 L1046.9 396.7 L1048.0 399.7 L1049.3 402.9 L1050.7 406.0 L1052.3 409.2 L1054.0 412.3 L1056.0 415.3 L1058.1 418.2 L1060.3 421.0 L1062.6 423.6 L1065.1 426.1 L1067.6 428.5 L1070.2 430.7 L1072.9 432.9 L1075.8 434.9 L1078.7 436.8 L1081.7 438.6 L1084.8 440.2 L1087.9 441.7 L1091.0 443.0 L1094.2 444.2 L1097.3 445.3 L1100.5 446.3 L1103.6 447.2 L1106.9 448.0 L1110.1 448.7 L1113.4 449.3 L1116.7 449.9 L1120.1 450.3 L1123.6 450.6 L1127.0 450.7 L1130.5 450.7 L1134.0 450.5 L1137.5 450.2 L1141.0 449.7 L1144.6 449.0 L1148.2 448.1 L1151.7 446.9 L1155.2 445.5 L1158.7 443.7 L1162.0 441.7 L1165.2 439.3 L1168.2 436.6 L1171.0 433.4 L1173.5 429.8 L1175.5 425.8 L1176.9 421.5 L1177.7 417.0 L1177.7 412.6 L1177.1 408.3 L1176.1 404.4 L1174.7 400.6 L1173.0 397.2 L1171.0 393.9 L1168.9 390.8 L1166.5 387.9 L1164.0 385.3 L1161.5 382.9 L1159.0 380.7 L1156.4 378.6 L1153.9 376.6 L1151.3 374.7 L1148.7 372.8 L1146.1 371.0 L1143.3 369.2 L1140.6 367.5 L1137.8 365.9 L1135.0 364.3 L1132.1 362.7 L1129.2 361.3 L1126.3 359.9 L1123.5 358.7 L1120.7 357.5 L1117.8 356.2" fill="none" stroke="#62666d" stroke-width="2.4"/>
<path d="M695.8 1057.4 L698.3 1055.3 L700.5 1053.3 L702.7 1051.4 L704.8 1049.4 L707.0 1047.5 L709.2 1045.5 L711.4 1043.5 L713.6 1041.5 L715.8 1039.6 L717.9 1037.5 L720.1 1035.5 L722.3 1033.5 L724.4 1031.4 L726.5 1029.4 L728.7 1027.3 L730.8 1025.2 L732.9 1023.2 L735.0 1021.1 L737.1 1019.0 L739.2 1016.9 L741.3 1014.9 L743.3 1012.8 L745.3 1010.7 L747.3 1008.6 L749.3 1006.4 L751.3 1004.3 L753.2 1002.1 L755.2 999.9 L757.1 997.7 L759.0 995.5 L760.9 993.2 L762.8 991.0 L764.6 988.8 L766.4 986.5 L768.2 984.3 L769.9 982.1 L771.6 979.8 L773.2 977.6 L774.8 975.3 L776.3 973.0 L777.8 970.7 L779.2 968.3 L780.5 965.9 L781.8 963.5 L783.1 961.0 L784.2 958.5 L785.4 956.0 L786.5 953.4 L787.6 950.8 L788.6 948.1 L789.6 945.5 L790.5 942.7 L791.5 940.0 L792.4 937.2 L793.4 934.4 L794.2 931.6 L795.1 928.8 L796.0 926.0 L796.8 923.2 L797.7 920.4 L798.5 917.6 L799.3 914.8 L800.0 912.0 L800.8 909.2 L801.5 906.3 L802.2 903.5 L802.9 900.7 L803.5 897.9 L804.1 895.1 L804.7 892.3 L805.2 889.4 L805.7 886.6 L806.2 883.8 L806.7 880.9 L807.1 878.1 L807.5 875.2 L807.8 872.3 L808.2 869.5 L808.5 866.6 L808.8 863.6 L809.0 860.7 L809.3 857.8 L809.5 854.8 L809.8 851.9 L810.0 848.9 L810.2 846.0 L810.4 843.0 L810.6 840.0 L810.8 837.0 L811.0 834.0 L811.2 831.0 L811.4 828.0 L811.6 825.1 L811.8 822.1 L812.0 819.1 L812.2 816.1 L812.4 813.1 L812.6 810.2 L812.8 807.2 L813.0 804.2 L813.2 801.2 L813.3 798.3 L813.5 795.3 L813.7 792.3 L813.8 789.4 L814.0 786.4 L814.1 783.5 L814.2 780.5 L814.3 777.5 L814.4 774.6 L814.5 771.6 L814.6 768.7 L814.7 765.7 L814.7 762.7 L814.8 759.8 L814.8 756.8 L814.9 753.8 L814.9 750.9 L814.9 747.9 L814.9 745.0 L814.9 742.0 L814.9 739.0 L814.9 736.1 L814.8 733.1 L814.8 730.2 L814.7 727.2 L814.6 724.2 L814.6 721.3 L814.5 718.3 L814.4 715.4 L814.3 712.4 L814.1 709.5 L814.0 706.6 L813.8 703.6 L813.7 700.7 L813.5 697.7 L813.3 694.7 L813.1 691.8 L812.9 688.8 L812.7 685.9 L812.4 682.9 L812.2 679.9 L812.0 676.9 L811.7 674.0 L811.5 671.0 L811.2 668.0 L811.0 665.1 L810.7 662.1 L810.4 659.1 L810.1 656.2 L809.8 653.2 L809.5 650.2 L809.2 647.3 L808.9 644.3 L808.6 641.4 L808.2 638.4 L807.9 635.5 L807.6 632.5 L807.2 629.6 L806.9 626.6 L806.5 623.7 L806.1 620.8 L805.7 617.8 L805.3 614.9 L804.9 612.0 L804.5 609.0 L804.0 606.1 L803.6 603.1 L803.2 600.2 L802.7 597.2 L802.3 594.2 L801.8 591.2 L801.4 588.3 L800.9 585.3 L800.5 582.3 L800.1 579.3 L799.7 576.3 L799.2 573.3 L798.8 570.3 L798.4 567.3 L798.0 564.3 L797.6 561.3 L797.2 558.4 L796.8 555.4 L796.4 552.4 L796.1 549.4 L795.7 546.4 L795.3 543.4 L794.9 540.4 L794.6 537.4 L794.2 534.4 L793.9 531.3 L793.6 528.3 L793.3 525.3 L793.0 522.2 L792.7 519.2 L792.5 516.1 L792.2 513.1 L792.0 510.0 L791.8 507.0 L791.6 503.9 L791.4 500.9 L791.2 497.8 L791.0 494.8 L790.9 491.7 L790.8 488.6 L790.7 485.6 L790.6 482.5 L790.5 479.4 L790.4 476.4 L790.4 473.3 L790.3 470.2 L790.3 467.1 L790.4 464.0 L790.4 460.9 L790.5 457.7 L790.6 454.6 L790.8 451.5 L791.0 448.4 L791.2 445.3 L791.4 442.2 L791.7 439.1 L792.0 436.0 L792.3 432.9 L792.7 429.8 L793.0 426.8 L793.4 423.7 L793.9 420.6 L794.3 417.5 L794.8 414.3 L795.4 411.1 L796.1 407.9 L796.8 404.6 L797.7 401.2 L798.7 397.9 L799.8 394.6 L801.1 391.3 L802.5 388.2 L803.9 385.3 L805.3 382.6 L806.7 379.9 L808.1 377.3 L809.4 374.7 L810.8 372.0 L812.2 369.3 L813.6 366.5 L815.1 363.7 L816.6 360.9 L818.2 358.1 L819.8 355.4 L821.5 352.7 L823.2 350.0 L824.9 347.3 L826.7 344.7 L828.6 342.0 L830.5 339.4 L832.4 336.8 L834.5 334.2 L836.6 331.7 L838.8 329.2 L841.0 326.8 L843.3 324.4 L845.7 322.1 L848.1 319.9 L850.5 317.7 L853.0 315.6 L855.6 313.5 L858.2 311.5 L860.8 309.6 L863.5 307.7 L866.3 305.9 L869.0 304.1 L871.8 302.5 L874.6 300.9 L877.3 299.4 L880.1 297.9 L882.8 296.5 L885.5 295.1 L888.3 293.6 L891.1 292.2 L894.0 290.8 L897.1 289.4 L900.2 288.1 L903.5 286.8 L906.8 285.7 L910.1 284.8 L913.5 284.0 L916.8 283.3 L920.2 282.7 L923.5 282.2 L926.9 281.9 L930.2 281.7 L933.5 281.5 L936.8 281.5 L940.2 281.5 L943.4 281.6 L946.7 281.8 L950.0 282.1 L953.2 282.5 L956.5 283.0 L959.7 283.5 L962.9 284.1 L966.1 284.7 L969.3 285.4 L972.5 286.3 L975.6 287.1 L978.7 288.1 L981.8 289.1 L984.8 290.1 L987.8 291.2 L990.8 292.4 L993.7 293.5 L996.6 294.8 L999.5 296.0 L1002.4 297.4 L1005.4 298.8 L1008.3 300.2 L1011.2 301.8 L1014.2 303.5 L1017.1 305.3 L1020.0 307.2 L1022.8 309.3 L1025.5 311.5 L1028.1 313.8 L1030.6 316.2 L1032.9 318.6 L1035.1 321.1 L1037.3 323.6 L1039.3 326.2 L1041.3 328.8 L1043.2 331.4 L1045.1 334.1 L1046.9 336.9 L1048.6 339.7 L1050.3 342.5 L1051.9 345.5 L1053.4 348.4 L1054.8 351.4 L1056.1 354.4 L1057.4 357.4 L1058.5 360.4 L1059.6 363.4 L1060.7 366.3 L1061.7 369.3 L1062.6 372.3 L1063.5 375.2 L1064.4 378.1 L1065.2 380.8 L1066.1 383.6 L1066.9 386.2 L1067.8 388.8 L1068.8 391.3 L1069.8 393.7 L1070.8 396.1 L1071.8 398.3 L1073.0 400.3 L1074.2 402.3 L1075.6 404.3 L1077.1 406.1 L1078.7 408.0 L1080.4 409.8 L1082.2 411.5 L1084.1 413.1 L1086.1 414.7 L1088.1 416.2 L1090.1 417.5 L1092.3 418.8 L1094.4 420.0 L1096.7 421.1 L1099.1 422.1 L1101.5 423.1 L1104.0 423.9 L1106.6 424.7 L1109.2 425.5 L1111.7 426.1 L1114.3 426.7 L1116.9 427.2 L1119.5 427.6 L1122.0 428.0 L1124.6 428.2 L1127.1 428.3 L1129.5 428.3 L1132.0 428.2 L1134.4 428.0 L1136.8 427.7 L1139.1 427.3 L1141.3 426.8 L1143.4 426.1 L1145.3 425.4 L1147.2 424.5 L1148.9 423.5 L1150.4 422.5 L1151.8 421.4 L1152.9 420.3 L1153.8 419.2 L1154.4 418.2 L1154.9 417.3 L1155.3 416.2 L1155.4 415.0 L1155.4 413.6 L1155.0 412.0 L1154.4 410.2 L1153.6 408.4 L1152.6 406.6 L1151.5 404.9 L1150.1 403.1 L1148.5 401.4 L1146.8 399.7 L1144.8 398.0 L1142.7 396.3 L1140.5 394.6 L1138.3 392.9 L1136.0 391.3 L1133.7 389.7 L1131.5 388.2 L1129.2 386.8 L1126.8 385.3 L1124.4 384.0 L1122.1 382.7 L1119.7 381.6 L1117.2 380.4 L1114.7 379.3 L1112.0 378.1 L1109.0 376.9" fill="none" stroke="#5e6268" stroke-width="1.7"/>
<path d="M709.2 1072.6 A10.1 10.1 0 0 1 695.8 1057.4" fill="none" stroke="#62666d" stroke-width="1.8"/>
<path d="M709.2 1072.6 L695.8 1057.4" stroke="#62666d" stroke-width="1.3"/>
<path d="M1117.8 356.2 A11.2 11.2 0 0 0 1109.0 376.9" fill="none" stroke="#62666d" stroke-width="1.8"/>
<path d="M1117.8 356.2 L1109.0 376.9" stroke="#62666d" stroke-width="1.3"/>
<path d="M731.8 1052.5L717.9 1037.5M753.9 1031.7L739.2 1016.9M775.1 1009.3L759.0 995.5M794.4 984.4L776.3 973.0M808.8 955.7L788.6 948.1M819.4 923.6L798.5 917.6M826.9 893.4L805.2 889.4M831.2 862.8L809.0 860.7M833.7 832.6L811.2 831.0M835.7 802.5L813.2 801.2M837.1 772.3L814.5 771.6M837.5 744.9L814.9 745.0M837.1 717.5L814.5 718.3M835.6 690.2L813.1 691.8M833.5 663.1L811.0 665.1M831.1 636.0L808.2 638.4M828.0 608.8L804.9 612.0M824.5 582.0L800.9 585.3M821.2 555.4L797.2 558.4M818.2 528.8L793.9 531.3M815.9 502.4L791.6 503.9M814.8 476.0L790.4 476.4M815.1 452.9L790.8 451.5M817.2 429.9L793.0 426.8M821.0 408.2L797.7 401.2M829.8 388.4L808.1 377.3M840.7 368.1L819.8 355.4M853.2 349.8L834.5 334.2M868.4 334.5L853.0 315.6M886.4 322.3L874.6 300.9M901.7 314.2L891.1 292.2M918.4 307.8L913.5 284.0M934.0 305.9L933.5 281.5M950.1 306.5L953.2 282.5M966.2 309.3L972.5 286.3M982.1 314.3L990.8 292.4M997.5 320.9L1008.3 300.2M1006.5 326.0L1020.0 307.2M1016.0 334.1L1032.9 318.6M1023.0 342.2L1041.3 328.8M1030.6 353.4L1050.3 342.5M1035.4 363.0L1056.1 354.4M1040.3 376.1L1061.7 369.3M1043.8 387.5L1065.2 380.8M1049.3 402.9L1069.8 393.7M1058.1 418.2L1075.6 404.3M1067.6 428.5L1082.2 411.5M1078.7 436.8L1090.1 417.5M1094.2 444.2L1101.5 423.1M1106.9 448.0L1111.7 426.1M1120.1 450.3L1122.0 428.0M1137.5 450.2L1134.4 428.0M1151.7 446.9L1143.4 426.1M1168.2 436.6L1151.8 421.4M1176.9 421.5L1154.9 417.3M1174.7 400.6L1154.4 410.2M1166.5 387.9L1150.1 403.1M1156.4 378.6L1142.7 396.3M1143.3 369.2L1131.5 388.2M1132.1 362.7L1122.1 382.7M1120.7 357.5L1112.0 378.1" stroke="#676b72" stroke-width="1.4"/>
<path d="M709.4 1059.0 L711.6 1057.0 L713.8 1055.1 L716.0 1053.1 L718.2 1051.1 L720.5 1049.1 L722.7 1047.1 L724.9 1045.0 L727.1 1043.0 L729.3 1041.0 L731.5 1038.9 L733.6 1036.8 L735.8 1034.8 L738.0 1032.7 L740.1 1030.6 L742.3 1028.5 L744.4 1026.4 L746.6 1024.3 L748.7 1022.2 L750.8 1020.1 L752.9 1017.9 L755.0 1015.7 L757.0 1013.6 L759.1 1011.4 L761.1 1009.1 L763.1 1006.9 L765.1 1004.6 L767.0 1002.4 L769.0 1000.1 L770.9 997.8 L772.9 995.5 L774.7 993.2 L776.6 990.9 L778.5 988.5 L780.3 986.1 L782.0 983.7 L783.7 981.2 L785.4 978.7 L787.0 976.2 L788.5 973.6 L790.0 971.0 L791.4 968.4 L792.8 965.7 L794.0 963.0 L795.3 960.2 L796.5 957.5 L797.6 954.7 L798.7 951.9 L799.7 949.1 L800.7 946.3 L801.7 943.5 L802.7 940.6 L803.6 937.8 L804.6 934.9 L805.5 932.1 L806.4 929.2 L807.2 926.3 L808.1 923.5 L809.0 920.6 L809.8 917.7 L810.6 914.8 L811.4 911.9 L812.1 909.0 L812.8 906.1 L813.5 903.2 L814.2 900.2 L814.8 897.3 L815.5 894.4 L816.0 891.4 L816.6 888.5 L817.1 885.5 L817.6 882.6 L818.0 879.6 L818.4 876.6 L818.8 873.7 L819.2 870.7 L819.5 867.7 L819.8 864.7 L820.1 861.7 L820.4 858.8 L820.7 855.8 L820.9 852.8 L821.1 849.8 L821.4 846.8 L821.6 843.8 L821.8 840.8 L822.0 837.8 L822.2 834.8 L822.4 831.8 L822.7 828.8 L822.9 825.8 L823.1 822.9 L823.3 819.9 L823.5 816.9 L823.7 813.9 L823.9 810.9 L824.1 807.9 L824.3 804.9 L824.5 801.9 L824.6 798.9 L824.8 795.9 L825.0 792.9 L825.1 789.9 L825.2 786.9 L825.4 783.9 L825.5 780.9 L825.6 777.9 L825.7 774.9 L825.8 771.9 L825.9 768.9 L826.0 765.9 L826.0 762.9 L826.1 759.9 L826.1 756.9 L826.2 753.9 L826.2 750.9 L826.2 747.9 L826.2 744.9 L826.2 741.9 L826.2 738.9 L826.2 735.9 L826.1 732.9 L826.1 729.9 L826.0 726.9 L825.9 723.9 L825.9 720.9 L825.8 717.9 L825.7 714.9 L825.6 711.9 L825.4 708.9 L825.3 706.0 L825.1 703.0 L824.9 700.0 L824.8 697.0 L824.6 694.0 L824.4 691.0 L824.1 688.0 L823.9 685.0 L823.7 682.0 L823.5 679.0 L823.2 676.0 L823.0 673.0 L822.7 670.0 L822.5 667.1 L822.2 664.1 L822.0 661.1 L821.7 658.1 L821.4 655.1 L821.1 652.1 L820.9 649.1 L820.6 646.1 L820.3 643.2 L820.0 640.2 L819.7 637.2 L819.3 634.2 L819.0 631.2 L818.7 628.2 L818.3 625.3 L818.0 622.3 L817.6 619.3 L817.2 616.3 L816.8 613.4 L816.5 610.4 L816.0 607.4 L815.6 604.4 L815.2 601.5 L814.8 598.5 L814.4 595.5 L814.0 592.6 L813.5 589.6 L813.1 586.6 L812.7 583.6 L812.3 580.7 L811.9 577.7 L811.5 574.7 L811.1 571.8 L810.7 568.8 L810.3 565.8 L810.0 562.8 L809.6 559.8 L809.2 556.9 L808.8 553.9 L808.5 550.9 L808.1 547.9 L807.7 545.0 L807.4 542.0 L807.0 539.0 L806.7 536.0 L806.4 533.0 L806.0 530.1 L805.7 527.1 L805.4 524.1 L805.1 521.1 L804.9 518.1 L804.6 515.1 L804.4 512.1 L804.1 509.1 L803.9 506.2 L803.7 503.2 L803.6 500.2 L803.4 497.2 L803.2 494.2 L803.1 491.2 L803.0 488.2 L802.8 485.2 L802.8 482.2 L802.7 479.2 L802.6 476.2 L802.6 473.2 L802.5 470.2 L802.5 467.2 L802.6 464.2 L802.6 461.2 L802.7 458.2 L802.8 455.2 L803.0 452.2 L803.1 449.2 L803.3 446.2 L803.6 443.2 L803.8 440.2 L804.1 437.3 L804.4 434.3 L804.8 431.3 L805.1 428.3 L805.5 425.3 L805.9 422.4 L806.4 419.4 L806.8 416.4 L807.4 413.5 L808.0 410.6 L808.6 407.6 L809.4 404.7 L810.2 401.9 L811.2 399.1 L812.3 396.3 L813.5 393.6 L814.8 390.9 L816.2 388.2 L817.5 385.6 L818.9 382.9 L820.3 380.2 L821.6 377.5 L823.0 374.9 L824.4 372.2 L825.8 369.6 L827.2 366.9 L828.7 364.3 L830.3 361.8 L831.8 359.2 L833.4 356.7 L835.0 354.1 L836.7 351.6 L838.4 349.2 L840.2 346.8 L842.0 344.4 L843.9 342.0 L845.8 339.7 L847.8 337.5 L849.8 335.3 L851.9 333.1 L854.0 331.0 L856.2 329.0 L858.4 327.0 L860.7 325.1 L863.0 323.2 L865.4 321.3 L867.8 319.6 L870.3 317.9 L872.8 316.2 L875.3 314.6 L877.9 313.1 L880.5 311.6 L883.1 310.1 L885.8 308.7 L888.4 307.3 L891.1 305.9 L893.7 304.5 L896.4 303.2 L899.1 301.9 L901.8 300.6 L904.6 299.5 L907.4 298.4 L910.2 297.5 L913.1 296.6 L916.0 295.9 L918.9 295.3 L921.8 294.8 L924.8 294.4 L927.8 294.1 L930.8 293.8 L933.7 293.7 L936.7 293.7 L939.7 293.7 L942.7 293.8 L945.7 294.0 L948.7 294.2 L951.7 294.5 L954.7 294.9 L957.6 295.3 L960.6 295.9 L963.5 296.4 L966.4 297.1 L969.3 297.8 L972.2 298.6 L975.1 299.4 L978.0 300.3 L980.8 301.3 L983.6 302.3 L986.4 303.3 L989.2 304.4 L992.0 305.6 L994.8 306.8 L997.5 308.0 L1000.2 309.3 L1002.9 310.6 L1005.6 312.0 L1008.2 313.4 L1010.7 314.9 L1013.2 316.6 L1015.6 318.3 L1018.0 320.2 L1020.2 322.1 L1022.4 324.2 L1024.5 326.3 L1026.5 328.6 L1028.4 330.8 L1030.3 333.1 L1032.2 335.5 L1033.9 337.9 L1035.7 340.4 L1037.3 342.9 L1038.9 345.4 L1040.5 348.0 L1041.9 350.6 L1043.3 353.2 L1044.6 355.9 L1045.8 358.7 L1046.9 361.5 L1048.0 364.2 L1049.0 367.1 L1050.0 369.9 L1051.0 372.7 L1051.9 375.6 L1052.8 378.5 L1053.7 381.3 L1054.5 384.2 L1055.4 387.1 L1056.4 389.9 L1057.3 392.7 L1058.4 395.5 L1059.5 398.3 L1060.7 401.0 L1062.1 403.7 L1063.5 406.3 L1065.1 408.8 L1066.8 411.2 L1068.7 413.6 L1070.6 415.8 L1072.7 417.9 L1074.9 420.0 L1077.2 421.9 L1079.5 423.8 L1081.9 425.5 L1084.4 427.2 L1087.0 428.7 L1089.6 430.1 L1092.3 431.4 L1095.1 432.6 L1097.8 433.6 L1100.7 434.6 L1103.5 435.5 L1106.4 436.3 L1109.3 437.1 L1112.2 437.7 L1115.2 438.3 L1118.1 438.8 L1121.1 439.1 L1124.1 439.4 L1127.0 439.5 L1130.0 439.5 L1133.0 439.4 L1136.0 439.1 L1138.9 438.7 L1141.8 438.2 L1144.7 437.4 L1147.5 436.5 L1150.3 435.4 L1152.9 434.1 L1155.4 432.6 L1157.8 430.9 L1160.0 429.0 L1162.0 426.8 L1163.6 424.5 L1165.0 422.0 L1165.9 419.4 L1166.5 416.6 L1166.6 413.8 L1166.2 411.0 L1165.6 408.2 L1164.6 405.4 L1163.3 402.8 L1161.8 400.2 L1160.2 397.8 L1158.3 395.5 L1156.3 393.4 L1154.1 391.3 L1151.9 389.3 L1149.6 387.4 L1147.2 385.6 L1144.8 383.8 L1142.4 382.1 L1139.9 380.4 L1137.4 378.7 L1134.9 377.1 L1132.3 375.6 L1129.7 374.1 L1127.1 372.7 L1124.4 371.4 L1121.8 370.2" fill="none" stroke="#ece65a" stroke-width="2.2"/>
<path d="M709 680.5H930" stroke="#d8807a" stroke-width="3" stroke-dasharray="1.4 1.6"/>
<rect x="697" y="674.5" width="12" height="12" rx="2" fill="#e6907f" stroke="#e2452f" stroke-width="2.5"/>
<path d="M893 723L931 685" stroke="#e6e8ec" stroke-width="1.3" stroke-dasharray="2 2"/>
<circle cx="887.5" cy="729" r="7.5" fill="none" stroke="#f4f4f4" stroke-width="2"/>
<path d="M935 690V1060" stroke="#8fc88a" stroke-width="1.3" stroke-dasharray="2 3" opacity=".6"/>
<rect x="929" y="1062" width="12" height="12" fill="none" stroke="#55c94a" stroke-width="2.5"/>
<path d="M952 680.5H1036" stroke="#e8432e" stroke-width="4"/>
<path d="M1032 673L1064 680.5L1032 688Z" fill="#ea4a30"/>
<path d="M935.5 665V582" stroke="#62cd4e" stroke-width="4.6" stroke-linecap="round"/>
<path d="M935.5 553Q928 563 927.5 583L943.5 583Q943 563 935.5 553Z" fill="#62d44e"/>
<rect x="931.5" y="677" width="7" height="7" fill="#fff" stroke="#111" stroke-width="1.6"/>
<path d="M808 680A127 127 0 0 0 935 808" fill="none" stroke="#2636cc" stroke-width="3.2"/>
<path d="M999.5 584V617M1015.5 584V617M1031.5 584V617" stroke="#7fd07f" stroke-width="2" opacity=".55"/>
<path d="M1000 584H1032M1000 600H1032M1000 616H1032" stroke="#c06a6a" stroke-width="1.8"/>
<path d="M371 1022V1068H418" fill="none" stroke="#5d6168" stroke-width="1.5"/>
<text x="375" y="1024" font-size="16" fill="#62666d" font-family="Liberation Sans">z</text>
<text x="423" y="1072" font-size="16" fill="#62666d" font-family="Liberation Sans">y</text>
<path d="M1153 446V472L1159 466L1164 477L1168 475L1163 464L1171 464Z" fill="#111" stroke="#fff" stroke-width="1.5"/>
</svg>
<div class="a" style="left:315px;top:187px;width:62px;height:30px;background:#3d6a9f;"></div>
<div class="t" style="left:320.9px;top:193.2px;font-size:19px;color:#ffffff;font-weight:bold;">Right</div>
<div class="a" style="left:312px;top:142px;width:1.5px;height:985px;background:#1f1f1f;"></div>
<div class="a" style="left:1568px;top:143px;width:495px;height:983px;background:#efefef;"></div>
<div class="a" style="left:1568px;top:143px;width:495px;height:41px;background:linear-gradient(#f6f6f6,#e9e9e9);"></div>
<div class="a" style="left:1568px;top:184px;width:495px;height:1px;background:#cdcdcd;"></div>
<svg class="a" style="left:1568px;top:142px" width="495" height="43" viewBox="1568 142 495 43"><path d="M1629 163.5L1644 154.5L1659 163.5L1644 172.5Z" fill="#f4f4f4" stroke="#6e6e6e" stroke-width="1.6" stroke-linejoin="round"/><path d="M1629 168.5L1644 177.5L1659 168.5" fill="none" stroke="#6e6e6e" stroke-width="1.6"/><circle cx="1682" cy="165.5" r="13" fill="none" stroke="#6e6e6e" stroke-width="1.6"/><circle cx="1682" cy="165.5" r="7" fill="none" stroke="#6e6e6e" stroke-width="1.6"/><path d="M1712.7 152.5H1725.7L1730.7 157.5V177.5H1712.7Z" fill="#f8f8f8" stroke="#6e6e6e" stroke-width="1.5"/><path d="M1746.5 158.5L1758.5 152.5L1770.5 158.5V172.5L1758.5 178.5L1746.5 172.5Z" fill="#f8f8f8" stroke="#6e6e6e" stroke-width="1.5"/><path d="M1746.5 158.5L1758.5 164.5L1770.5 158.5M1758.5 164.5V178.5" fill="none" stroke="#6e6e6e" stroke-width="1.5"/><path d="M1782.4 157.5H1791.4L1794.4 153.5H1802.4L1805.4 157.5H1812.4V177.5H1782.4Z" fill="#f8f8f8" stroke="#6e6e6e" stroke-width="1.5"/><circle cx="1797.4" cy="167.5" r="7" fill="none" stroke="#6e6e6e" stroke-width="1.5"/><circle cx="1797.4" cy="167.5" r="4" fill="none" stroke="#6e6e6e" stroke-width="1.3"/><path d="M1821.4 171.5L1841.4 176.5M1821.4 171.5L1831.4 157.5M1823.9 168.0L1843.9 173.0M1826.4 172.8L1836.4 158.8M1826.4 164.5L1846.4 169.5M1831.4 174.0L1841.4 160.0M1828.9 161.0L1848.9 166.0M1836.4 175.2L1846.4 161.2M1831.4 157.5L1851.4 162.5M1841.4 176.5L1851.4 162.5" stroke="#a8a8a8" stroke-width="1.1" fill="none"/><path d="M1837.4 160.5L1836.4 169.5L1846.4 171.5" fill="none" stroke="#444" stroke-width="1.8"/><path d="M1866.8 175.5V155.5Q1866.8 152.5 1870.8 152.5H1885.8Q1887.8 153.5 1885.8 156.5H1882.8V175.5Q1882.8 178.5 1878.8 178.5H1862.8Q1860.8 176.5 1862.8 174.5H1878.8" fill="#f8f8f8" stroke="#6e6e6e" stroke-width="1.5"/><rect x="1899.2" y="153.5" width="26" height="23" fill="#f8f8f8" stroke="#6e6e6e" stroke-width="1.5"/><path d="M1900.2 154.5h4" stroke="#333" stroke-width="1.6"/><rect x="1937.4" y="153.5" width="28" height="19" rx="1.5" fill="#e4eefa" stroke="#4a8ee0" stroke-width="1.9"/><path d="M1947.4 175.5H1955.4M1951.4 172.5V175.5" stroke="#4a8ee0" stroke-width="2"/><path d="M1943.4 177.5H1959.4" stroke="#4a8ee0" stroke-width="1.5"/><text x="1989.1" y="177.5" text-anchor="middle" font-family="Liberation Sans" font-weight="bold" font-size="35" fill="#454545">?</text></svg>
<div class="a" style="left:2042px;top:185px;width:21px;height:586px;background:#fafafa;"></div>
<div class="a" style="left:2042px;top:185px;width:1px;height:586px;background:#ececec;"></div>
<div class="a" style="left:2047px;top:190px;width:13px;height:322px;border-radius:6px;background:#c6c6c6"></div>
<div class="t" style="left:1600.4px;top:199.9px;font-size:22px;color:#1e1e1e;">Viewport settings</div>
<div class="t" style="left:1615.8px;top:230.9px;font-size:19px;color:#222;">Active viewport:</div>
<div class="t" style="left:1763.6px;top:230.9px;font-size:19px;color:#222;">Right</div>
<div class="t" style="left:1629.6px;top:270.1px;font-size:19px;color:#222;">Display mode:</div>
<div class="a" style="left:1766px;top:265px;width:128px;height:27px;border-radius:5px;background:#fff;box-shadow:0 1px 1.5px rgba(0,0,0,.25)"></div>
<div class="a" style="left:1871px;top:265px;width:23px;height:27px;border-radius:0 5px 5px 0;background:linear-gradient(#6aa8f5,#3a84e8)"></div>
<svg class="a" style="left:1871px;top:265px" width="23" height="27" viewBox="0 0 23 27"><path d="M7 11L11.5 6.5L16 11M7 16L11.5 20.5L16 16" fill="none" stroke="#fff" stroke-width="1.8"/></svg>
<div class="t" style="left:1777.8px;top:270.1px;font-size:19px;color:#222;">Wireframe</div>
<div class="t" style="left:1648.5px;top:310.2px;font-size:19px;color:#222;">Background</div>
<div class="a" style="left:1766px;top:305px;width:242px;height:27px;border-radius:5px;background:#fff;box-shadow:0 1px 1.5px rgba(0,0,0,.25)"></div>
<div class="a" style="left:1985px;top:305px;width:23px;height:27px;border-radius:0 5px 5px 0;background:linear-gradient(#6aa8f5,#3a84e8)"></div>
<svg class="a" style="left:1985px;top:305px" width="23" height="27" viewBox="0 0 23 27"><path d="M7 11L11.5 6.5L16 11M7 16L11.5 20.5L16 16" fill="none" stroke="#fff" stroke-width="1.8"/></svg>
<div class="t" style="left:1776.6px;top:310.2px;font-size:19px;color:#222;">Use application settings</div>
<div class="t" style="left:1599.6px;top:348.9px;font-size:22px;color:#1e1e1e;">General settings</div>
<div class="a" style="left:1725px;top:383.7px;width:19px;height:19px;border-radius:4px;background:#f9f9f9;border:1px solid #dadada"></div>
<div class="t" style="left:1751.1px;top:383.6px;font-size:19px;color:#bcbcbc;">Flat shading</div>
<div class="a" style="left:1725px;top:412.6px;width:19px;height:19px;border-radius:4px;background:#f9f9f9;border:1px solid #dadada"></div>
<div class="t" style="left:1751.6px;top:412.5px;font-size:19px;color:#bcbcbc;">Shade vertex colors</div>
<div class="a" style="left:1725px;top:441.5px;width:19px;height:19px;border-radius:4px;background:#f9f9f9;border:1px solid #dadada"></div>
<div class="t" style="left:1751.6px;top:441.4px;font-size:19px;color:#bcbcbc;">Shadows</div>
<div class="a" style="left:1725px;top:470.3px;width:19px;height:19px;border-radius:4px;background:#4d93e6"></div>
<svg class="a" style="left:1725px;top:470.3px" width="19" height="19" viewBox="0 0 19 19"><path d="M5 9.5L8.3 13.5L14 4" fill="none" stroke="#fff" stroke-width="2.4"/></svg>
<div class="t" style="left:1751.6px;top:470.3px;font-size:19px;color:#222;">Surface isocurves</div>
<div class="a" style="left:1725px;top:499.2px;width:19px;height:19px;border-radius:4px;background:#4d93e6"></div>
<svg class="a" style="left:1725px;top:499.2px" width="19" height="19" viewBox="0 0 19 19"><path d="M5 9.5L8.3 13.5L14 4" fill="none" stroke="#fff" stroke-width="2.4"/></svg>
<div class="t" style="left:1751.6px;top:499.1px;font-size:19px;color:#222;">Surface edges</div>
<div class="a" style="left:1725px;top:528.1px;width:19px;height:19px;border-radius:4px;background:#4d93e6"></div>
<svg class="a" style="left:1725px;top:528.1px" width="19" height="19" viewBox="0 0 19 19"><path d="M5 9.5L8.3 13.5L14 4" fill="none" stroke="#fff" stroke-width="2.4"/></svg>
<div class="t" style="left:1751.1px;top:528.0px;font-size:19px;color:#222;">Mesh wires</div>
<div class="a" style="left:1725px;top:557.0px;width:19px;height:19px;border-radius:4px;background:#4d93e6"></div>
<svg class="a" style="left:1725px;top:557.0px" width="19" height="19" viewBox="0 0 19 19"><path d="M5 9.5L8.3 13.5L14 4" fill="none" stroke="#fff" stroke-width="2.4"/></svg>
<div class="t" style="left:1751.6px;top:556.9px;font-size:19px;color:#222;">Curves</div>
<div class="a" style="left:1725px;top:585.9px;width:19px;height:19px;border-radius:4px;background:#f9f9f9;border:1px solid #dadada"></div>
<svg class="a" style="left:1725px;top:585.9px" width="19" height="19" viewBox="0 0 19 19"><path d="M5 9.5L8.3 13.5L14 4" fill="none" stroke="#8a8a8a" stroke-width="1.6"/></svg>
<div class="t" style="left:1751.1px;top:585.8px;font-size:19px;color:#bcbcbc;">Hidden lines</div>
<div class="a" style="left:1725px;top:614.7px;width:19px;height:19px;border-radius:4px;background:#f9f9f9;border:1px solid #dadada"></div>
<svg class="a" style="left:1725px;top:614.7px" width="19" height="19" viewBox="0 0 19 19"><path d="M5 9.5L8.3 13.5L14 4" fill="none" stroke="#8a8a8a" stroke-width="1.6"/></svg>
<div class="t" style="left:1751.1px;top:614.7px;font-size:19px;color:#bcbcbc;">Edges</div>
<div class="a" style="left:1725px;top:643.6px;width:19px;height:19px;border-radius:4px;background:#f9f9f9;border:1px solid #dadada"></div>
<svg class="a" style="left:1725px;top:643.6px" width="19" height="19" viewBox="0 0 19 19"><path d="M5 9.5L8.3 13.5L14 4" fill="none" stroke="#8a8a8a" stroke-width="1.6"/></svg>
<div class="t" style="left:1751.6px;top:643.5px;font-size:19px;color:#bcbcbc;">Silhouettes</div>
<div class="a" style="left:1725px;top:672.5px;width:19px;height:19px;border-radius:4px;background:#f9f9f9;border:1px solid #dadada"></div>
<svg class="a" style="left:1725px;top:672.5px" width="19" height="19" viewBox="0 0 19 19"><path d="M5 9.5L8.3 13.5L14 4" fill="none" stroke="#8a8a8a" stroke-width="1.6"/></svg>
<div class="t" style="left:1751.6px;top:672.4px;font-size:19px;color:#bcbcbc;">Creases</div>
<div class="a" style="left:1725px;top:701.4px;width:19px;height:19px;border-radius:4px;background:#f9f9f9;border:1px solid #dadada"></div>
<div class="t" style="left:1751.6px;top:701.3px;font-size:19px;color:#bcbcbc;">Seams</div>
<div class="a" style="left:1725px;top:730.3px;width:19px;height:19px;border-radius:4px;background:#f9f9f9;border:1px solid #dadada"></div>
<svg class="a" style="left:1725px;top:730.3px" width="19" height="19" viewBox="0 0 19 19"><path d="M5 9.5L8.3 13.5L14 4" fill="none" stroke="#8a8a8a" stroke-width="1.6"/></svg>
<div class="t" style="left:1751.1px;top:730.2px;font-size:19px;color:#bcbcbc;">Intersections</div>
<div class="a" style="left:1725px;top:759.1px;width:19px;height:19px;border-radius:4px;background:#4d93e6"></div>
<svg class="a" style="left:1725px;top:759.1px" width="19" height="19" viewBox="0 0 19 19"><path d="M5 9.5L8.3 13.5L14 4" fill="none" stroke="#fff" stroke-width="2.4"/></svg>
<div class="t" style="left:1751.1px;top:759.1px;font-size:19px;color:#222;">Lights</div>
<div class="a" style="left:1568px;top:771px;width:495px;height:355px;background:#efefef;"></div>
<div class="a" style="left:1568px;top:771.5px;width:495px;height:1.5px;background:#7a7a7a;"></div>
<div class="a" style="left:1568px;top:773px;width:495px;height:42px;background:linear-gradient(#f6f6f6,#e9e9e9);"></div>
<svg class="a" style="left:1568px;top:773px" width="495" height="43" viewBox="1568 773 495 43"><path d="M1629 794.8L1644 785.8L1659 794.8L1644 803.8Z" fill="#f4f4f4" stroke="#4a8ee0" stroke-width="1.6" stroke-linejoin="round"/><path d="M1629 799.8L1644 808.8L1659 799.8" fill="none" stroke="#4a8ee0" stroke-width="1.6"/><circle cx="1682" cy="796.8" r="13" fill="none" stroke="#6e6e6e" stroke-width="1.6"/><circle cx="1682" cy="796.8" r="7" fill="none" stroke="#6e6e6e" stroke-width="1.6"/><path d="M1712.7 783.8H1725.7L1730.7 788.8V808.8H1712.7Z" fill="#f8f8f8" stroke="#6e6e6e" stroke-width="1.5"/><path d="M1746.5 789.8L1758.5 783.8L1770.5 789.8V803.8L1758.5 809.8L1746.5 803.8Z" fill="#f8f8f8" stroke="#6e6e6e" stroke-width="1.5"/><path d="M1746.5 789.8L1758.5 795.8L1770.5 789.8M1758.5 795.8V809.8" fill="none" stroke="#6e6e6e" stroke-width="1.5"/><path d="M1782.4 788.8H1791.4L1794.4 784.8H1802.4L1805.4 788.8H1812.4V808.8H1782.4Z" fill="#f8f8f8" stroke="#6e6e6e" stroke-width="1.5"/><circle cx="1797.4" cy="798.8" r="7" fill="none" stroke="#6e6e6e" stroke-width="1.5"/><circle cx="1797.4" cy="798.8" r="4" fill="none" stroke="#6e6e6e" stroke-width="1.3"/><path d="M1821.4 802.8L1841.4 807.8M1821.4 802.8L1831.4 788.8M1823.9 799.3L1843.9 804.3M1826.4 804.0L1836.4 790.0M1826.4 795.8L1846.4 800.8M1831.4 805.3L1841.4 791.3M1828.9 792.3L1848.9 797.3M1836.4 806.5L1846.4 792.5M1831.4 788.8L1851.4 793.8M1841.4 807.8L1851.4 793.8" stroke="#a8a8a8" stroke-width="1.1" fill="none"/><path d="M1837.4 791.8L1836.4 800.8L1846.4 802.8" fill="none" stroke="#444" stroke-width="1.8"/><path d="M1866.8 806.8V786.8Q1866.8 783.8 1870.8 783.8H1885.8Q1887.8 784.8 1885.8 787.8H1882.8V806.8Q1882.8 809.8 1878.8 809.8H1862.8Q1860.8 807.8 1862.8 805.8H1878.8" fill="#f8f8f8" stroke="#6e6e6e" stroke-width="1.5"/><rect x="1899.2" y="784.8" width="26" height="23" fill="#f8f8f8" stroke="#6e6e6e" stroke-width="1.5"/><path d="M1900.2 785.8h4" stroke="#333" stroke-width="1.6"/><rect x="1937.4" y="784.8" width="28" height="19" rx="1.5" fill="#f4f4f4" stroke="#6e6e6e" stroke-width="1.9"/><path d="M1947.4 806.8H1955.4M1951.4 803.8V806.8" stroke="#6e6e6e" stroke-width="2"/><path d="M1943.4 808.8H1959.4" stroke="#6e6e6e" stroke-width="1.5"/><text x="1989.1" y="808.8" text-anchor="middle" font-family="Liberation Sans" font-weight="bold" font-size="35" fill="#454545">?</text></svg>
<div class="a" style="left:1568px;top:815px;width:495px;height:235px;background:#ffffff;"></div>
<div class="a" style="left:1568px;top:1050px;width:495px;height:23px;background:#f9f9f9;"></div>
<div class="a" style="left:1568px;top:1049.5px;width:495px;height:1px;background:#e2e2e2;"></div>
<div class="a" style="left:1568px;top:815px;width:495px;height:1px;background:#d8d8d8;"></div>
<div class="t" style="left:1574.4px;top:818.4px;font-size:18px;color:#222;">Name</div>
<div class="t" style="left:1957.2px;top:818.4px;font-size:18px;color:#222;">Linetype</div>
<div class="a" style="left:1700.4px;top:819px;width:1px;height:20px;background:#ececec;"></div>
<div class="a" style="left:1737.2px;top:819px;width:1px;height:20px;background:#ececec;"></div>
<div class="a" style="left:1774.5px;top:819px;width:1px;height:20px;background:#ececec;"></div>
<div class="a" style="left:1851.4px;top:819px;width:1px;height:20px;background:#ececec;"></div>
<div class="a" style="left:1909px;top:819px;width:1px;height:20px;background:#ececec;"></div>
<div class="a" style="left:1950.9px;top:819px;width:1px;height:20px;background:#ececec;"></div>
<div class="a" style="left:1568px;top:841px;width:495px;height:1px;background:#e6e6e6;"></div>
<div class="t" style="left:1597.9px;top:845.8px;font-size:18.5px;color:#222;">Default</div>
<div class="a" style="left:1708px;top:843.5px;width:22px;height:22px;border-radius:50%;background:#4d93e6"></div>
<div class="a" style="left:1716px;top:851.5px;width:6px;height:6px;border-radius:50%;background:#fff"></div>
<svg class="a" style="left:1744px;top:842.5px;opacity:.45" width="24" height="26" viewBox="0 0 24 26">
<path d="M5 12Q1 4 8 2Q12 0 16 2Q23 4 19 12L16 17H8Z" fill="#f4b432" stroke="#c88a20" stroke-width=".8"/>
<ellipse cx="10" cy="6" rx="3" ry="2" fill="#fde59a"/><rect x="8" y="17" width="8" height="5" rx="1" fill="#ddd" stroke="#999" stroke-width=".7"/></svg>
<svg class="a" style="left:1800px;top:841.5px;opacity:.45" width="26" height="26" viewBox="0 0 26 26">
<path d="M13 11V6Q13 2 17 2Q21 2 21 6V9" fill="none" stroke="#bdbdbd" stroke-width="2.2"/>
<rect x="3" y="11" width="14" height="12" rx="1.5" fill="#d8963a" stroke="#a86a20" stroke-width=".8"/><rect x="3" y="11" width="14" height="4" fill="#f0c070"/></svg>
<div class="a" style="left:1869px;top:844.5px;width:22px;height:22px;background:#000000;border:2px solid #111"></div>
<div class="a" style="left:1921px;top:845.5px;width:18px;height:18px;border-radius:50%;background:radial-gradient(circle at 30% 30%,#fff 0,#999 35%,#111 70%)"></div>
<div class="t" style="left:1960.7px;top:846.6px;font-size:18.8px;color:#222;">Continuous</div>
<div class="t" style="left:1597.9px;top:873.1px;font-size:18.5px;color:#222;">Layer 01</div>
<div class="a" style="left:1708px;top:870.8px;width:22px;height:22px;border-radius:50%;background:#fff;border:1px solid #cfcfcf"></div>
<svg class="a" style="left:1744px;top:869.8px;opacity:1" width="24" height="26" viewBox="0 0 24 26">
<path d="M5 12Q1 4 8 2Q12 0 16 2Q23 4 19 12L16 17H8Z" fill="#f4b432" stroke="#c88a20" stroke-width=".8"/>
<ellipse cx="10" cy="6" rx="3" ry="2" fill="#fde59a"/><rect x="8" y="17" width="8" height="5" rx="1" fill="#ddd" stroke="#999" stroke-width=".7"/></svg>
<svg class="a" style="left:1800px;top:868.8px;opacity:1" width="26" height="26" viewBox="0 0 26 26">
<path d="M13 11V6Q13 2 17 2Q21 2 21 6V9" fill="none" stroke="#bdbdbd" stroke-width="2.2"/>
<rect x="3" y="11" width="14" height="12" rx="1.5" fill="#d8963a" stroke="#a86a20" stroke-width=".8"/><rect x="3" y="11" width="14" height="4" fill="#f0c070"/></svg>
<div class="a" style="left:1869px;top:871.8px;width:22px;height:22px;background:#e84a2e;border:2px solid #111"></div>
<div class="a" style="left:1921px;top:872.8px;width:18px;height:18px;border-radius:50%;background:radial-gradient(circle at 30% 30%,#fff 0,#999 35%,#111 70%)"></div>
<div class="t" style="left:1960.7px;top:873.9px;font-size:18.8px;color:#222;">Continuous</div>
<div class="t" style="left:1597.9px;top:900.4px;font-size:18.5px;color:#222;">Layer 02</div>
<div class="a" style="left:1708px;top:898.1px;width:22px;height:22px;border-radius:50%;background:#fff;border:1px solid #cfcfcf"></div>
<svg class="a" style="left:1744px;top:897.1px;opacity:1" width="24" height="26" viewBox="0 0 24 26">
<path d="M5 12Q1 4 8 2Q12 0 16 2Q23 4 19 12L16 17H8Z" fill="#f4b432" stroke="#c88a20" stroke-width=".8"/>
<ellipse cx="10" cy="6" rx="3" ry="2" fill="#fde59a"/><rect x="8" y="17" width="8" height="5" rx="1" fill="#ddd" stroke="#999" stroke-width=".7"/></svg>
<svg class="a" style="left:1800px;top:896.1px;opacity:1" width="26" height="26" viewBox="0 0 26 26">
<path d="M13 11V6Q13 2 17 2Q21 2 21 6V9" fill="none" stroke="#bdbdbd" stroke-width="2.2"/>
<rect x="3" y="11" width="14" height="12" rx="1.5" fill="#d8963a" stroke="#a86a20" stroke-width=".8"/><rect x="3" y="11" width="14" height="4" fill="#f0c070"/></svg>
<div class="a" style="left:1869px;top:899.1px;width:22px;height:22px;background:#9a68d6;border:2px solid #111"></div>
<div class="a" style="left:1921px;top:900.1px;width:18px;height:18px;border-radius:50%;background:radial-gradient(circle at 30% 30%,#fff 0,#999 35%,#111 70%)"></div>
<div class="t" style="left:1960.7px;top:901.2px;font-size:18.8px;color:#222;">Continuous</div>
<div class="t" style="left:1597.9px;top:927.7px;font-size:18.5px;color:#222;">Layer 03</div>
<div class="a" style="left:1708px;top:925.4px;width:22px;height:22px;border-radius:50%;background:#fff;border:1px solid #cfcfcf"></div>
<svg class="a" style="left:1744px;top:924.4px;opacity:1" width="24" height="26" viewBox="0 0 24 26">
<path d="M5 12Q1 4 8 2Q12 0 16 2Q23 4 19 12L16 17H8Z" fill="#f4b432" stroke="#c88a20" stroke-width=".8"/>
<ellipse cx="10" cy="6" rx="3" ry="2" fill="#fde59a"/><rect x="8" y="17" width="8" height="5" rx="1" fill="#ddd" stroke="#999" stroke-width=".7"/></svg>
<svg class="a" style="left:1800px;top:923.4px;opacity:1" width="26" height="26" viewBox="0 0 26 26">
<path d="M13 11V6Q13 2 17 2Q21 2 21 6V9" fill="none" stroke="#bdbdbd" stroke-width="2.2"/>
<rect x="3" y="11" width="14" height="12" rx="1.5" fill="#d8963a" stroke="#a86a20" stroke-width=".8"/><rect x="3" y="11" width="14" height="4" fill="#f0c070"/></svg>
<div class="a" style="left:1869px;top:926.4px;width:22px;height:22px;background:#1f4ff0;border:2px solid #111"></div>
<div class="a" style="left:1921px;top:927.4px;width:18px;height:18px;border-radius:50%;background:radial-gradient(circle at 30% 30%,#fff 0,#999 35%,#111 70%)"></div>
<div class="t" style="left:1960.7px;top:928.5px;font-size:18.8px;color:#222;">Continuous</div>
<div class="t" style="left:1597.9px;top:955.0px;font-size:18.5px;color:#222;">Layer 04</div>
<div class="a" style="left:1708px;top:952.7px;width:22px;height:22px;border-radius:50%;background:#fff;border:1px solid #cfcfcf"></div>
<svg class="a" style="left:1744px;top:951.7px;opacity:1" width="24" height="26" viewBox="0 0 24 26">
<path d="M5 12Q1 4 8 2Q12 0 16 2Q23 4 19 12L16 17H8Z" fill="#f4b432" stroke="#c88a20" stroke-width=".8"/>
<ellipse cx="10" cy="6" rx="3" ry="2" fill="#fde59a"/><rect x="8" y="17" width="8" height="5" rx="1" fill="#ddd" stroke="#999" stroke-width=".7"/></svg>
<svg class="a" style="left:1800px;top:950.7px;opacity:1" width="26" height="26" viewBox="0 0 26 26">
<path d="M13 11V6Q13 2 17 2Q21 2 21 6V9" fill="none" stroke="#bdbdbd" stroke-width="2.2"/>
<rect x="3" y="11" width="14" height="12" rx="1.5" fill="#d8963a" stroke="#a86a20" stroke-width=".8"/><rect x="3" y="11" width="14" height="4" fill="#f0c070"/></svg>
<div class="a" style="left:1869px;top:953.7px;width:22px;height:22px;background:#2e7b2c;border:2px solid #111"></div>
<div class="a" style="left:1921px;top:954.7px;width:18px;height:18px;border-radius:50%;background:radial-gradient(circle at 30% 30%,#fff 0,#999 35%,#111 70%)"></div>
<div class="t" style="left:1960.7px;top:955.8px;font-size:18.8px;color:#222;">Continuous</div>
<div class="t" style="left:1597.9px;top:982.3px;font-size:18.5px;color:#222;">Layer 05</div>
<div class="a" style="left:1708px;top:980.0px;width:22px;height:22px;border-radius:50%;background:#fff;border:1px solid #cfcfcf"></div>
<svg class="a" style="left:1744px;top:979.0px;opacity:1" width="24" height="26" viewBox="0 0 24 26">
<path d="M5 12Q1 4 8 2Q12 0 16 2Q23 4 19 12L16 17H8Z" fill="#f4b432" stroke="#c88a20" stroke-width=".8"/>
<ellipse cx="10" cy="6" rx="3" ry="2" fill="#fde59a"/><rect x="8" y="17" width="8" height="5" rx="1" fill="#ddd" stroke="#999" stroke-width=".7"/></svg>
<svg class="a" style="left:1800px;top:978.0px;opacity:1" width="26" height="26" viewBox="0 0 26 26">
<path d="M13 11V6Q13 2 17 2Q21 2 21 6V9" fill="none" stroke="#bdbdbd" stroke-width="2.2"/>
<rect x="3" y="11" width="14" height="12" rx="1.5" fill="#d8963a" stroke="#a86a20" stroke-width=".8"/><rect x="3" y="11" width="14" height="4" fill="#f0c070"/></svg>
<div class="a" style="left:1869px;top:981.0px;width:22px;height:22px;background:#ffffff;border:2px solid #111"></div>
<div class="a" style="left:1921px;top:982.0px;width:18px;height:18px;border-radius:50%;background:radial-gradient(circle at 30% 30%,#fff 0,#999 35%,#111 70%)"></div>
<div class="t" style="left:1960.7px;top:983.1px;font-size:18.8px;color:#222;">Continuous</div>
<div class="a" style="left:1573px;top:1056px;width:409px;height:12px;border-radius:6px;background:#c8c8c8"></div>
<div class="a" style="left:1568px;top:1072px;width:495px;height:1px;background:#dedede;"></div>
<div class="a" style="left:1598px;top:1084px;width:70px;height:30px;border-radius:5px;background:#fbfbfb;box-shadow:0 1px 1.5px rgba(0,0,0,.15)"></div>
<div class="a" style="left:1634px;top:1086px;width:1px;height:26px;background:#e4e4e4;"></div>
<div class="a" style="left:1607px;top:1098.5px;width:17px;height:1.5px;background:#333;"></div>
<div class="a" style="left:1614.8px;top:1091px;width:1.5px;height:17px;background:#333;"></div>
<div class="a" style="left:1643px;top:1098.5px;width:17px;height:1.5px;background:#cfcfcf;"></div>
<div class="a" style="left:1693px;top:1084px;width:58px;height:30px;border-radius:5px;background:#fbfbfb;box-shadow:0 1px 1.5px rgba(0,0,0,.15)"></div>
<svg class="a" style="left:1700px;top:1087px" width="48" height="24" viewBox="0 0 48 24">
<g transform="translate(12.6 12)"><circle r="6" fill="#222"/><g fill="#222"><rect x="-1.8" y="-9" width="3.6" height="18"/><rect x="-1.8" y="-9" width="3.6" height="18" transform="rotate(45)"/><rect x="-1.8" y="-9" width="3.6" height="18" transform="rotate(90)"/><rect x="-1.8" y="-9" width="3.6" height="18" transform="rotate(135)"/></g><circle r="2.5" fill="#fbfbfb"/></g>
<path d="M34 10L38.5 14.5L43 10" fill="none" stroke="#333" stroke-width="1.6"/></svg>
<div class="a" style="left:1567px;top:142px;width:1.5px;height:985px;background:#1f1f1f;"></div>
<div class="a" style="left:15px;top:1126px;width:2048px;height:41px;background:linear-gradient(#d5d5d5,#e3e3e3);"></div>
<div class="a" style="left:15px;top:1126px;width:2048px;height:1px;background:#c8c8c8;"></div>
<div class="a" style="left:22px;top:1141.5px;width:23px;height:1.5px;background:#5a5a5a;"></div>
<div class="a" style="left:22px;top:1145.1px;width:23px;height:1.5px;background:#5a5a5a;"></div>
<div class="a" style="left:22px;top:1148.7px;width:23px;height:1.5px;background:#5a5a5a;"></div>
<div class="a" style="left:22px;top:1152.3px;width:23px;height:1.5px;background:#5a5a5a;"></div>
<div class="a" style="left:22px;top:1155.9px;width:23px;height:1.5px;background:#5a5a5a;"></div>
<div class="t" style="left:47.8px;top:1140.1px;font-size:19.4px;color:#1e1e1e;">1 curve added to selection.</div>
<div class="a" style="left:1365px;top:1138px;width:111px;height:24px;border-radius:5px;background:linear-gradient(#f4f4f4,#e6e6e6);border:1px solid #b5b5b5"></div>
<div class="t" style="left:1375.8px;top:1140.7px;font-size:19px;color:#222;">CPlane</div>
<svg class="a" style="left:1455px;top:1141px" width="16" height="20" viewBox="0 0 16 20"><path d="M4 7L8 3L12 7M4 12L8 16L12 12" fill="none" stroke="#666" stroke-width="1.5"/></svg>
<div class="t" style="left:1499.3px;top:1141.3px;font-size:18.3px;color:#1e1e1e;">X: 6.154</div>
<div class="t" style="left:1631.1px;top:1141.3px;font-size:18.3px;color:#1e1e1e;">Y: 24.554</div>
<div class="t" style="left:1766.8px;top:1141.3px;font-size:18.3px;color:#1e1e1e;">Z: 0.000</div>
<div class="a" style="left:1890px;top:1133.5px;width:167px;height:27px;background:#d8354a;"></div>
<div class="t" style="left:1898.5px;top:1136.4px;font-size:19.6px;color:#b2f2b0;font-weight:bold;font-family:'Liberation Serif',serif;letter-spacing:-0.45px;">www.aplboda.com</div>
<div class="a" style="left:15px;top:15px;width:300px;height:200px;overflow:hidden">
<div class="a" style="left:-153.95px;top:39.05px;width:400px;height:36.5px;background:#d93a4d;transform:rotate(-34.1deg);transform-origin:200px 18.25px"><div class="t" style="left:221px;top:9px;width:0;font-family:'Liberation Serif',serif;font-weight:bold;font-size:17.5px;color:#b6f0a6;"><span style="position:absolute;left:0;top:0;transform:translateX(-50%)">www.aplboda.com</span></div></div>
</div>
</body></html>
